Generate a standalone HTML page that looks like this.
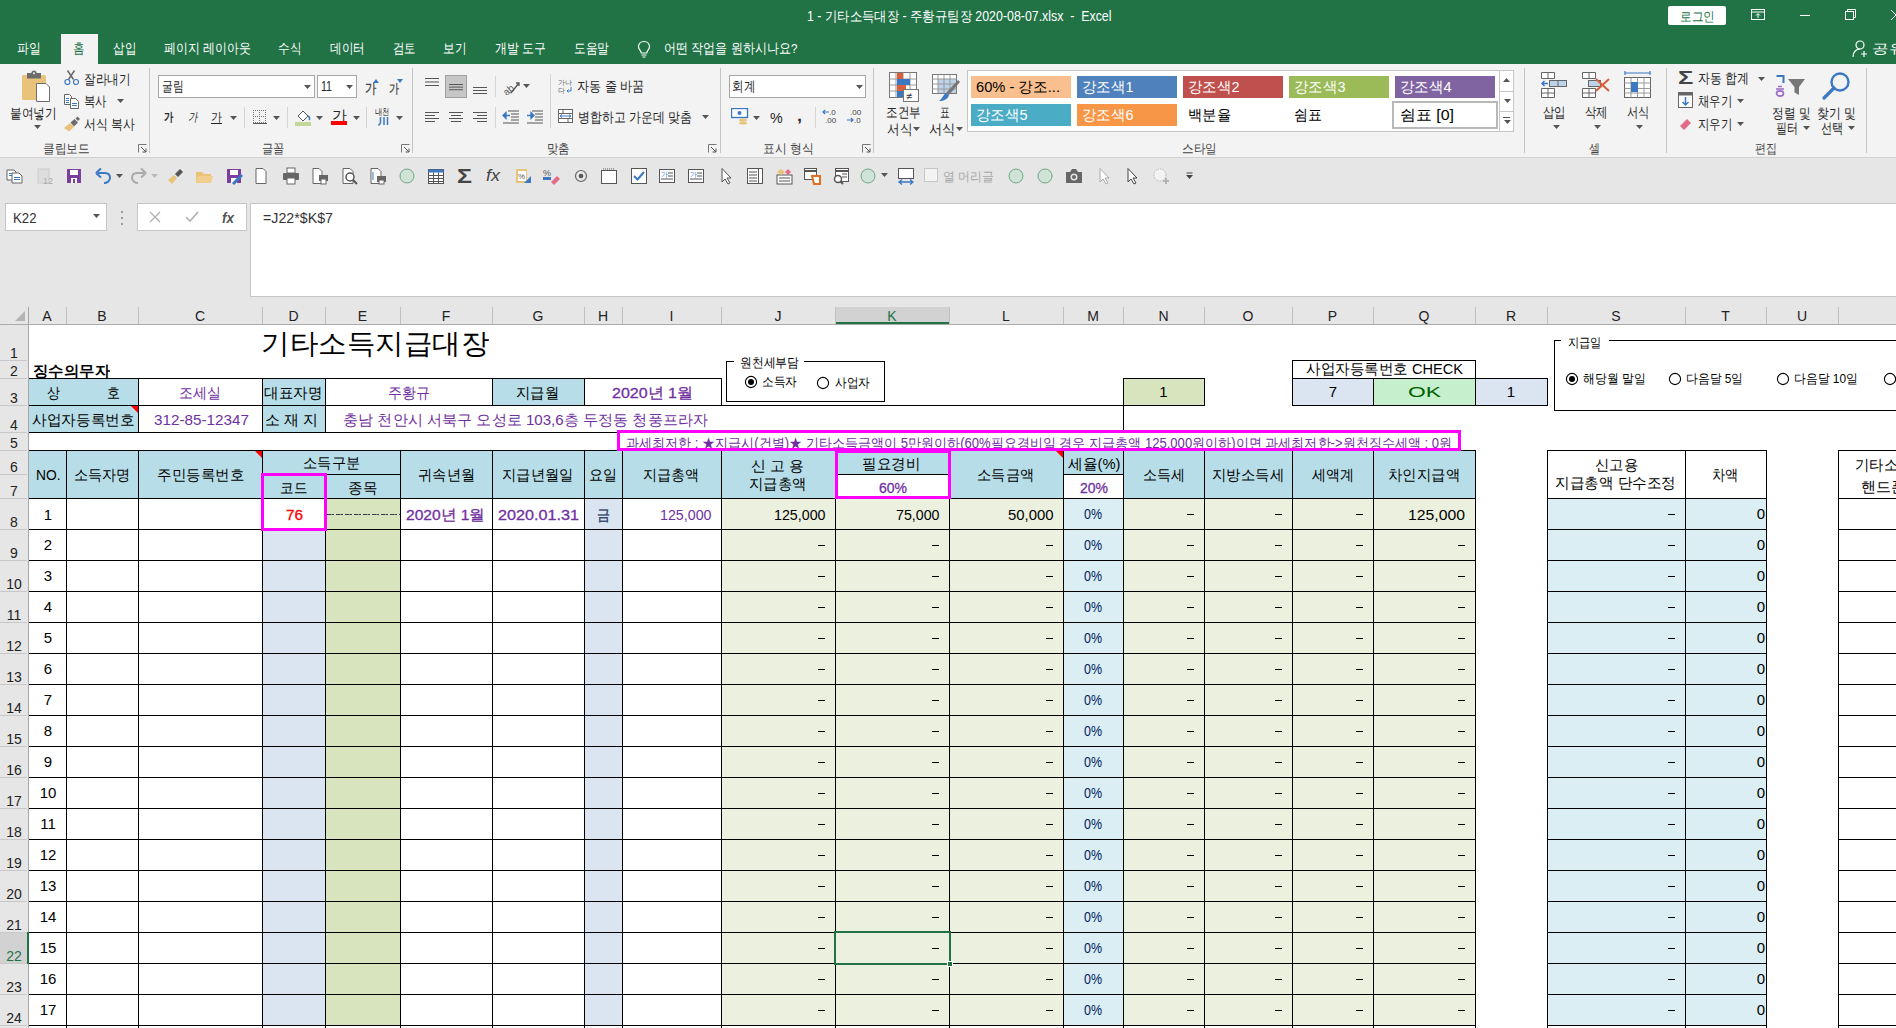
<!DOCTYPE html><html><head><meta charset="utf-8"><style>
*{margin:0;padding:0;box-sizing:border-box}
html,body{width:1896px;height:1028px;overflow:hidden;background:#fff;font-family:"Liberation Sans",sans-serif;}
#r{position:relative;width:1896px;height:1028px;overflow:hidden}
#r>div,#r>svg{position:absolute}
.t{white-space:nowrap;overflow:visible}
.f{white-space:nowrap;overflow:visible;text-align:left}
.f span{display:inline-block;transform-origin:0 50%}
</style></head><body><div id="r"><div style="left:0px;top:0px;width:1896px;height:64px;background:#217346"></div>
<div class="f" style="left:807px;top:6.5px;width:304.5px;height:18px;line-height:18px;font-size:14px;color:#fff;font-weight:normal;white-space:pre"><span>1 - 기타소득대장 - 주황규팀장 2020-08-07.xlsx  -  Excel</span></div>
<div style="left:1668px;top:6px;width:58px;height:19px;background:#fff;border-radius:2px"></div>
<div class="f" style="left:1679.5px;top:7.5px;width:35.0px;height:17px;line-height:17px;font-size:13px;color:#217346;font-weight:normal;"><span>로그인</span></div>
<svg style="left:1751px;top:9px;" width="15" height="12" viewBox="0 0 15 12"><rect x="0.5" y="0.5" width="13" height="10" fill="none" stroke="#fff"/><line x1="0.5" y1="3" x2="13.5" y2="3" stroke="#fff"/><path d="M7 9 V5 M5 6.5 L7 4.5 L9 6.5" stroke="#fff" fill="none"/></svg>
<div style="left:1800px;top:15px;width:10px;height:1px;background:#fff"></div>
<svg style="left:1845px;top:9px;" width="12" height="12" viewBox="0 0 12 12"><rect x="0.5" y="2.5" width="8" height="8" fill="none" stroke="#fff"/><path d="M2.5 2.5 V0.5 H10.5 V8.5 H8.5" fill="none" stroke="#fff"/></svg>
<svg style="left:1889px;top:9px;" width="7" height="12" viewBox="0 0 7 12"><path d="M2 1 L7 6 M2 11 L7 6" stroke="#fff" fill="none"/></svg>
<svg style="left:1852px;top:40px;" width="17" height="18" viewBox="0 0 17 18"><circle cx="8" cy="5" r="4" fill="none" stroke="#fff" stroke-width="1.2"/><path d="M1 17 C1 11 5 9 8 9" fill="none" stroke="#fff" stroke-width="1.2"/><path d="M12 11 V17 M9 14 H15" stroke="#fff" stroke-width="1.2"/></svg>
<div class="f" style="left:1872px;top:40.0px;width:33.0px;height:17px;line-height:17px;font-size:13px;color:#fff;font-weight:normal;"><span>공유</span></div>
<div style="left:61px;top:34px;width:37px;height:30px;background:#f3f3f3"></div>
<div class="f" style="left:17.3px;top:39.5px;width:23.7px;height:18px;line-height:18px;font-size:13.5px;color:#fff;font-weight:normal;"><span>파일</span></div>
<div class="f" style="left:73px;top:39.5px;width:11.6px;height:18px;line-height:18px;font-size:13.5px;color:#217346;font-weight:normal;"><span>홈</span></div>
<div class="f" style="left:112.5px;top:39.5px;width:23.1px;height:18px;line-height:18px;font-size:13.5px;color:#fff;font-weight:normal;"><span>삽입</span></div>
<div class="f" style="left:163.5px;top:39.5px;width:86.8px;height:18px;line-height:18px;font-size:13.5px;color:#fff;font-weight:normal;"><span>페이지 레이아웃</span></div>
<div class="f" style="left:278px;top:39.5px;width:23.3px;height:18px;line-height:18px;font-size:13.5px;color:#fff;font-weight:normal;"><span>수식</span></div>
<div class="f" style="left:329.6px;top:39.5px;width:34.8px;height:18px;line-height:18px;font-size:13.5px;color:#fff;font-weight:normal;"><span>데이터</span></div>
<div class="f" style="left:392.6px;top:39.5px;width:22.8px;height:18px;line-height:18px;font-size:13.5px;color:#fff;font-weight:normal;"><span>검토</span></div>
<div class="f" style="left:443.2px;top:39.5px;width:23.3px;height:18px;line-height:18px;font-size:13.5px;color:#fff;font-weight:normal;"><span>보기</span></div>
<div class="f" style="left:494.6px;top:39.5px;width:51.0px;height:18px;line-height:18px;font-size:13.5px;color:#fff;font-weight:normal;"><span>개발 도구</span></div>
<div class="f" style="left:573.5px;top:39.5px;width:35.2px;height:18px;line-height:18px;font-size:13.5px;color:#fff;font-weight:normal;"><span>도움말</span></div>
<div class="f" style="left:664.3px;top:39.5px;width:133.4px;height:18px;line-height:18px;font-size:13.5px;color:#fff;font-weight:normal;"><span>어떤 작업을 원하시나요?</span></div>
<svg style="left:636px;top:40px;" width="16" height="18" viewBox="0 0 16 18"><path d="M8 1.5 C4.5 1.5 2.5 4 2.5 6.8 C2.5 9.5 5 10.5 5.3 13 H10.7 C11 10.5 13.5 9.5 13.5 6.8 C13.5 4 11.5 1.5 8 1.5 Z" fill="none" stroke="#fff" stroke-width="1.2"/><path d="M5.5 15 H10.5 M6.5 17 H9.5" stroke="#fff" stroke-width="1.2"/></svg>
<div style="left:0px;top:64px;width:1896px;height:93px;background:#f3f3f3"></div>
<div style="left:0px;top:157px;width:1896px;height:1px;background:#d2d2d2"></div>
<div style="left:149px;top:68px;width:1px;height:85px;background:#c4c4c4"></div>
<div style="left:412px;top:68px;width:1px;height:85px;background:#c4c4c4"></div>
<div style="left:720px;top:68px;width:1px;height:85px;background:#c4c4c4"></div>
<div style="left:873px;top:68px;width:1px;height:85px;background:#c4c4c4"></div>
<div style="left:1524px;top:68px;width:1px;height:85px;background:#c4c4c4"></div>
<div style="left:1666px;top:68px;width:1px;height:85px;background:#c4c4c4"></div>
<div style="left:1866px;top:68px;width:1px;height:85px;background:#c4c4c4"></div>
<div class="f" style="left:42.7px;top:139.8px;width:46.7px;height:17px;line-height:17px;font-size:13px;color:#444;font-weight:normal;"><span>클립보드</span></div>
<div class="f" style="left:261.8px;top:139.8px;width:22.5px;height:17px;line-height:17px;font-size:13px;color:#444;font-weight:normal;"><span>글꼴</span></div>
<div class="f" style="left:546.7px;top:139.8px;width:22.8px;height:17px;line-height:17px;font-size:13px;color:#444;font-weight:normal;"><span>맞춤</span></div>
<div class="f" style="left:763.4px;top:139.8px;width:50.8px;height:17px;line-height:17px;font-size:13px;color:#444;font-weight:normal;"><span>표시 형식</span></div>
<div class="f" style="left:1181.5px;top:139.8px;width:34.8px;height:17px;line-height:17px;font-size:13px;color:#444;font-weight:normal;"><span>스타일</span></div>
<div class="f" style="left:1589.4px;top:139.8px;width:11.0px;height:17px;line-height:17px;font-size:13px;color:#444;font-weight:normal;"><span>셀</span></div>
<div class="f" style="left:1755px;top:139.8px;width:22.0px;height:17px;line-height:17px;font-size:13px;color:#444;font-weight:normal;"><span>편집</span></div>
<svg style="left:138px;top:144px;" width="9" height="9" viewBox="0 0 9 9"><path d="M0.5 8.5 V0.5 H8.5" fill="none" stroke="#777"/><path d="M3 3 L8 8 M8 4.5 V8 H4.5" fill="none" stroke="#555"/></svg>
<svg style="left:401px;top:144px;" width="9" height="9" viewBox="0 0 9 9"><path d="M0.5 8.5 V0.5 H8.5" fill="none" stroke="#777"/><path d="M3 3 L8 8 M8 4.5 V8 H4.5" fill="none" stroke="#555"/></svg>
<svg style="left:708px;top:144px;" width="9" height="9" viewBox="0 0 9 9"><path d="M0.5 8.5 V0.5 H8.5" fill="none" stroke="#777"/><path d="M3 3 L8 8 M8 4.5 V8 H4.5" fill="none" stroke="#555"/></svg>
<svg style="left:862px;top:144px;" width="9" height="9" viewBox="0 0 9 9"><path d="M0.5 8.5 V0.5 H8.5" fill="none" stroke="#777"/><path d="M3 3 L8 8 M8 4.5 V8 H4.5" fill="none" stroke="#555"/></svg>
<svg style="left:20px;top:69px;" width="32" height="34" viewBox="0 0 32 34"><rect x="2" y="6" width="24" height="25" rx="1.5" fill="#e9c37a"/><path d="M7 4 H21 V9.5 H7 Z" fill="#6d6d6d"/><circle cx="14" cy="4" r="2.6" fill="#6d6d6d"/><circle cx="14" cy="4.2" r="1" fill="#f3f3f3"/><path d="M16.5 14.5 H26 L29.5 18 V32.5 H16.5 Z" fill="#fff" stroke="#6d6d6d"/></svg>
<div class="f" style="left:10.3px;top:103.7px;width:46.7px;height:18px;line-height:18px;font-size:14px;color:#262626;font-weight:normal;"><span>붙여넣기</span></div>
<svg style="left:33.5px;top:124.5px;" width="7" height="4" viewBox="0 0 7 4"><path d="M0 0 H7 L3.5 4 Z" fill="#555"/></svg>
<svg style="left:63px;top:69px;" width="16" height="17" viewBox="0 0 16 17"><path d="M4.5 1.5 L10.5 10.5 M11.5 1.5 L5.5 10.5" stroke="#666" stroke-width="1.4"/><circle cx="4.4" cy="13" r="2.5" fill="none" stroke="#3b78c4" stroke-width="1.2"/><circle cx="13" cy="13" r="2.5" fill="none" stroke="#3b78c4" stroke-width="1.2"/></svg>
<div class="f" style="left:83.5px;top:69.5px;width:46.5px;height:18px;line-height:18px;font-size:14px;color:#262626;font-weight:normal;"><span>잘라내기</span></div>
<svg style="left:63px;top:93px;" width="17" height="16" viewBox="0 0 17 16"><path d="M1.5 1.5 H6.5 L8.5 3.5 V11.5 H1.5 Z" fill="#fff" stroke="#666"/><path d="M7.5 5.5 H12.5 L15.5 8.5 V15.5 H7.5 Z" fill="#fff" stroke="#666"/><path d="M3 5.5 H6 M3 7.5 H6 M3 9.5 H6 M9 10.5 H14 M9 12.5 H14" stroke="#3b78c4"/></svg>
<div class="f" style="left:83.5px;top:92.0px;width:22.8px;height:18px;line-height:18px;font-size:14px;color:#262626;font-weight:normal;"><span>복사</span></div>
<svg style="left:116.5px;top:99px;" width="7" height="4" viewBox="0 0 7 4"><path d="M0 0 H7 L3.5 4 Z" fill="#555"/></svg>
<svg style="left:63px;top:116px;" width="18" height="16" viewBox="0 0 18 16"><path d="M1 12 L7 7 L11 11 L6 15.5 Z" fill="#e9c37a"/><path d="M7.5 6.5 L11.5 3 L15 6.5 L11 10.5 Z" fill="#6d6d6d"/><path d="M12.5 2.5 L14.5 0.5 L17 3 L15 5 Z" fill="#6d6d6d"/></svg>
<div class="f" style="left:83.5px;top:115.2px;width:51.0px;height:18px;line-height:18px;font-size:14px;color:#262626;font-weight:normal;"><span>서식 복사</span></div>
<div style="left:158px;top:75px;width:157px;height:23px;background:#fff;border:1px solid #a6a6a6"></div>
<div class="f" style="left:162px;top:77.3px;width:21.5px;height:18px;line-height:18px;font-size:14px;color:#262626;font-weight:normal;"><span>굴림</span></div>
<svg style="left:304px;top:84.5px;" width="7" height="4" viewBox="0 0 7 4"><path d="M0 0 H7 L3.5 4 Z" fill="#555"/></svg>
<div style="left:317px;top:75px;width:40px;height:23px;background:#fff;border:1px solid #a6a6a6"></div>
<div class="f" style="left:321px;top:77.3px;width:11.0px;height:18px;line-height:18px;font-size:14px;color:#262626;font-weight:normal;"><span>11</span></div>
<svg style="left:346px;top:84.5px;" width="7" height="4" viewBox="0 0 7 4"><path d="M0 0 H7 L3.5 4 Z" fill="#555"/></svg>
<div class="f" style="left:364.7px;top:78.5px;width:11.3px;height:18px;line-height:18px;font-size:14px;color:#444;font-weight:normal;-webkit-text-stroke:0.3px #444"><span>가</span></div>
<svg style="left:373px;top:79px;" width="6" height="4" viewBox="0 0 6 4"><path d="M0 4 L3 0 L6 4 Z" fill="#3b78c4"/></svg>
<div class="f" style="left:389px;top:80.0px;width:10.0px;height:17px;line-height:17px;font-size:13px;color:#444;font-weight:normal;-webkit-text-stroke:0.3px #444"><span>가</span></div>
<svg style="left:397px;top:79px;" width="6" height="4" viewBox="0 0 6 4"><path d="M0 0 L3 4 L6 0 Z" fill="#3b78c4"/></svg>
<div class="f" style="left:163.7px;top:109.3px;width:9.3px;height:16px;line-height:16px;font-size:12px;color:#262626;font-weight:bold;"><span>가</span></div>
<div class="f" style="left:187.5px;top:109.3px;width:9.5px;height:16px;line-height:16px;font-size:12px;color:#262626;font-weight:normal;font-style:italic"><span>가</span></div>
<div class="f" style="left:211px;top:108.5px;width:11.0px;height:16px;line-height:16px;font-size:12px;color:#262626;font-weight:normal;"><span>가</span></div>
<div style="left:211px;top:123px;width:11px;height:1px;background:#262626"></div>
<svg style="left:230.4px;top:115.5px;" width="7" height="4" viewBox="0 0 7 4"><path d="M0 0 H7 L3.5 4 Z" fill="#555"/></svg>
<div style="left:244px;top:107px;width:1px;height:21px;background:#d4d4d4"></div>
<svg style="left:253px;top:110px;" width="14" height="15" viewBox="0 0 14 15"><rect x="0" y="0" width="1" height="1" fill="#777"/><rect x="0" y="6" width="1" height="1" fill="#777"/><rect x="0" y="12" width="1" height="1" fill="#777"/><rect x="2" y="0" width="1" height="1" fill="#777"/><rect x="2" y="6" width="1" height="1" fill="#777"/><rect x="2" y="12" width="1" height="1" fill="#777"/><rect x="4" y="0" width="1" height="1" fill="#777"/><rect x="4" y="6" width="1" height="1" fill="#777"/><rect x="4" y="12" width="1" height="1" fill="#777"/><rect x="6" y="0" width="1" height="1" fill="#777"/><rect x="6" y="6" width="1" height="1" fill="#777"/><rect x="6" y="12" width="1" height="1" fill="#777"/><rect x="8" y="0" width="1" height="1" fill="#777"/><rect x="8" y="6" width="1" height="1" fill="#777"/><rect x="8" y="12" width="1" height="1" fill="#777"/><rect x="10" y="0" width="1" height="1" fill="#777"/><rect x="10" y="6" width="1" height="1" fill="#777"/><rect x="10" y="12" width="1" height="1" fill="#777"/><rect x="12" y="0" width="1" height="1" fill="#777"/><rect x="12" y="6" width="1" height="1" fill="#777"/><rect x="12" y="12" width="1" height="1" fill="#777"/><rect x="0" y="0" width="1" height="1" fill="#777"/><rect x="6" y="0" width="1" height="1" fill="#777"/><rect x="12" y="0" width="1" height="1" fill="#777"/><rect x="0" y="2" width="1" height="1" fill="#777"/><rect x="6" y="2" width="1" height="1" fill="#777"/><rect x="12" y="2" width="1" height="1" fill="#777"/><rect x="0" y="4" width="1" height="1" fill="#777"/><rect x="6" y="4" width="1" height="1" fill="#777"/><rect x="12" y="4" width="1" height="1" fill="#777"/><rect x="0" y="6" width="1" height="1" fill="#777"/><rect x="6" y="6" width="1" height="1" fill="#777"/><rect x="12" y="6" width="1" height="1" fill="#777"/><rect x="0" y="8" width="1" height="1" fill="#777"/><rect x="6" y="8" width="1" height="1" fill="#777"/><rect x="12" y="8" width="1" height="1" fill="#777"/><rect x="0" y="10" width="1" height="1" fill="#777"/><rect x="6" y="10" width="1" height="1" fill="#777"/><rect x="12" y="10" width="1" height="1" fill="#777"/><rect x="0" y="13" width="14" height="1" fill="#555"/></svg>
<svg style="left:273.4px;top:115.5px;" width="7" height="4" viewBox="0 0 7 4"><path d="M0 0 H7 L3.5 4 Z" fill="#555"/></svg>
<div style="left:287px;top:107px;width:1px;height:21px;background:#d4d4d4"></div>
<svg style="left:295px;top:108px;" width="17" height="18" viewBox="0 0 17 18"><path d="M3 8 L8 3 L13 8 L8 13 Z" fill="#fff" stroke="#555"/><path d="M13 8 C15 9 15 11 14 12" stroke="#3b78c4" stroke-width="1.5" fill="none"/><rect x="0" y="14" width="16" height="4" fill="#c4d79b"/></svg>
<svg style="left:316px;top:115.5px;" width="7" height="4" viewBox="0 0 7 4"><path d="M0 0 H7 L3.5 4 Z" fill="#555"/></svg>
<div class="f" style="left:331.5px;top:106.0px;width:15.0px;height:18px;line-height:18px;font-size:14px;color:#262626;font-weight:normal;"><span>가</span></div>
<div style="left:331px;top:121px;width:16px;height:4px;background:#ff0000"></div>
<svg style="left:352.5px;top:115.5px;" width="7" height="4" viewBox="0 0 7 4"><path d="M0 0 H7 L3.5 4 Z" fill="#555"/></svg>
<div style="left:366px;top:107px;width:1px;height:21px;background:#d4d4d4"></div>
<div class="f" style="left:375px;top:105.5px;width:14.7px;height:12px;line-height:12px;font-size:9px;color:#262626;font-weight:normal;"><span>내천</span></div>
<svg style="left:377px;top:117px;" width="12" height="9" viewBox="0 0 12 9"><path d="M3.5 0 V6 L1.5 8.5 M7 0 V8 M10.5 0 V8" stroke="#3b78c4" stroke-width="1.5" fill="none"/></svg>
<svg style="left:395.7px;top:115.5px;" width="7" height="4" viewBox="0 0 7 4"><path d="M0 0 H7 L3.5 4 Z" fill="#555"/></svg>
<svg style="left:425px;top:78px;" width="14" height="10.5" viewBox="0 0 14 10.5"><rect x="0" y="0.0" width="14" height="1" fill="#555"/><rect x="0" y="3.5" width="14" height="1" fill="#555"/><rect x="0" y="7.0" width="14" height="1" fill="#555"/></svg>
<div style="left:445px;top:75px;width:22px;height:23px;background:#c6c6c6;border:1px solid #a0a0a0"></div>
<svg style="left:449px;top:84px;" width="14" height="7.800000000000001" viewBox="0 0 14 7.800000000000001"><rect x="0" y="0.0" width="14" height="1" fill="#555"/><rect x="0" y="2.6" width="14" height="1" fill="#555"/><rect x="0" y="5.2" width="14" height="1" fill="#555"/></svg>
<svg style="left:473px;top:87px;" width="14" height="9" viewBox="0 0 14 9"><rect x="0" y="0" width="14" height="1" fill="#555"/><rect x="0" y="3" width="14" height="1" fill="#555"/><rect x="0" y="6" width="14" height="1" fill="#555"/></svg>
<div style="left:495px;top:76px;width:1px;height:21px;background:#d4d4d4"></div>
<svg style="left:502px;top:78px;" width="26" height="17" viewBox="0 0 26 17"><text x="0" y="14" font-size="10" fill="#555" transform="rotate(-40 8 10)" font-family="Liberation Sans">ab</text><path d="M9 15 L17 5 M14 5 H17 V8" stroke="#555" fill="none" stroke-width="1.3"/></svg>
<svg style="left:522.6px;top:84px;" width="7" height="4" viewBox="0 0 7 4"><path d="M0 0 H7 L3.5 4 Z" fill="#555"/></svg>
<div style="left:550px;top:74px;width:1px;height:54px;background:#d4d4d4"></div>
<svg style="left:558px;top:78px;" width="16" height="16" viewBox="0 0 16 16"><text x="0" y="7" font-size="7" fill="#555" font-family="Liberation Sans">가나</text><text x="0" y="15" font-size="7" fill="#555" font-family="Liberation Sans">다</text><path d="M13 9 V13 H9 M10.5 11.5 L9 13 L10.5 14.5" stroke="#3b78c4" fill="none"/></svg>
<div class="f" style="left:577.4px;top:77.2px;width:67.2px;height:18px;line-height:18px;font-size:14px;color:#262626;font-weight:normal;"><span>자동 줄 바꿈</span></div>
<svg style="left:425px;top:112px;" width="14" height="12" viewBox="0 0 14 12"><rect x="0" y="0" width="14" height="1" fill="#555"/><rect x="0" y="3" width="10" height="1" fill="#555"/><rect x="0" y="6" width="14" height="1" fill="#555"/><rect x="0" y="9" width="10" height="1" fill="#555"/></svg>
<svg style="left:449px;top:112px;" width="14" height="12" viewBox="0 0 14 12"><rect x="0.0" y="0" width="14" height="1" fill="#555"/><rect x="2.0" y="3" width="10" height="1" fill="#555"/><rect x="0.0" y="6" width="14" height="1" fill="#555"/><rect x="2.0" y="9" width="10" height="1" fill="#555"/></svg>
<svg style="left:473px;top:112px;" width="14" height="12" viewBox="0 0 14 12"><rect x="0" y="0" width="14" height="1" fill="#555"/><rect x="4" y="3" width="10" height="1" fill="#555"/><rect x="0" y="6" width="14" height="1" fill="#555"/><rect x="4" y="9" width="10" height="1" fill="#555"/></svg>
<div style="left:495px;top:107px;width:1px;height:21px;background:#d4d4d4"></div>
<svg style="left:502px;top:110px;" width="17" height="14" viewBox="0 0 17 14"><path d="M6 1 H17 M9 4 H17 M9 7 H17 M9 10 H17 M1 13 H17" stroke="#555"/><path d="M1 5.5 L4 2.5 V8.5 Z M4 5.5 H8" fill="#3b78c4" stroke="#3b78c4" stroke-width="1.3"/></svg>
<svg style="left:526px;top:110px;" width="17" height="14" viewBox="0 0 17 14"><path d="M6 1 H17 M9 4 H17 M9 7 H17 M9 10 H17 M1 13 H17" stroke="#555"/><path d="M8 5.5 L5 2.5 V8.5 Z M1 5.5 H5" fill="#3b78c4" stroke="#3b78c4" stroke-width="1.3"/></svg>
<svg style="left:558px;top:109px;" width="16" height="15" viewBox="0 0 16 15"><rect x="0.5" y="0.5" width="14" height="13" fill="#fff" stroke="#666"/><path d="M0.5 4.5 H14.5 M0.5 9.5 H14.5 M5 0.5 V4.5 M10 9.5 V13.5" stroke="#666"/><path d="M2 7 H13 M4 5.5 L2 7 L4 8.5 M11 5.5 L13 7 L11 8.5" stroke="#3b78c4" fill="none"/></svg>
<div class="f" style="left:578.3px;top:107.5px;width:113.9px;height:18px;line-height:18px;font-size:14px;color:#262626;font-weight:normal;"><span>병합하고 가운데 맞춤</span></div>
<svg style="left:702.4px;top:115px;" width="7" height="4" viewBox="0 0 7 4"><path d="M0 0 H7 L3.5 4 Z" fill="#555"/></svg>
<div style="left:729px;top:75px;width:137px;height:23px;background:#fff;border:1px solid #a6a6a6"></div>
<div class="f" style="left:732.3px;top:77.3px;width:23.0px;height:18px;line-height:18px;font-size:14px;color:#262626;font-weight:normal;"><span>회계</span></div>
<svg style="left:855.6px;top:84.5px;" width="7" height="4" viewBox="0 0 7 4"><path d="M0 0 H7 L3.5 4 Z" fill="#555"/></svg>
<svg style="left:731px;top:108px;" width="18" height="17" viewBox="0 0 18 17"><rect x="0.5" y="0.5" width="16" height="9" fill="#fff" stroke="#3b78c4" stroke-width="1.4"/><circle cx="8.5" cy="5" r="2" fill="#3b78c4"/><ellipse cx="12" cy="12" rx="4" ry="1.6" fill="#e9c37a"/><ellipse cx="12" cy="15" rx="4" ry="1.6" fill="#e9c37a"/></svg>
<svg style="left:753.4px;top:115.5px;" width="7" height="4" viewBox="0 0 7 4"><path d="M0 0 H7 L3.5 4 Z" fill="#555"/></svg>
<div class="f" style="left:770px;top:107.5px;width:12.7px;height:20px;line-height:20px;font-size:15px;color:#262626;font-weight:normal;"><span>%</span></div>
<div class="f" style="left:797px;top:107.0px;width:5.0px;height:18px;line-height:18px;font-size:14px;color:#262626;font-weight:bold;"><span>,</span></div>
<div style="left:815px;top:107px;width:1px;height:21px;background:#d4d4d4"></div>
<svg style="left:822px;top:108px;" width="17" height="16" viewBox="0 0 17 16"><text x="7" y="7" font-size="8" fill="#444" font-family="Liberation Sans">.0</text><text x="3" y="15" font-size="8" fill="#444" font-family="Liberation Sans">.00</text><path d="M1 4 H7 M3 2 L1 4 L3 6" stroke="#3b78c4" fill="none" stroke-width="1.2"/></svg>
<svg style="left:846px;top:108px;" width="17" height="16" viewBox="0 0 17 16"><text x="4" y="7" font-size="8" fill="#444" font-family="Liberation Sans">.00</text><text x="8" y="15" font-size="8" fill="#444" font-family="Liberation Sans">.0</text><path d="M1 12 H7 M5 10 L7 12 L5 14" stroke="#3b78c4" fill="none" stroke-width="1.2"/></svg>
<svg style="left:889px;top:72px;" width="30" height="30" viewBox="0 0 30 30"><rect x="0.5" y="0.5" width="27" height="25" fill="#fff" stroke="#777"/><path d="M0.5 7 H27.5 M0.5 13 H27.5 M0.5 19 H27.5 M7 0.5 V25.5 M14 0.5 V25.5 M21 0.5 V25.5" stroke="#999"/><rect x="8" y="1" width="6" height="6" fill="#d9603b"/><rect x="8" y="7" width="13" height="6" fill="#3b78c4"/><rect x="8" y="13" width="9" height="6" fill="#d9603b"/><rect x="8" y="19" width="6" height="6" fill="#3b78c4"/><rect x="14.5" y="17.5" width="15" height="12" fill="#fff" stroke="#777"/><text x="17" y="28" font-size="11" fill="#333" font-family="Liberation Sans">≠</text></svg>
<div class="f" style="left:885.7px;top:102.7px;width:34.6px;height:18px;line-height:18px;font-size:14px;color:#262626;font-weight:normal;"><span>조건부</span></div>
<div class="f" style="left:886.7px;top:119.8px;width:25.3px;height:18px;line-height:18px;font-size:14px;color:#262626;font-weight:normal;"><span>서식</span></div>
<svg style="left:913px;top:127px;" width="7" height="4" viewBox="0 0 7 4"><path d="M0 0 H7 L3.5 4 Z" fill="#555"/></svg>
<svg style="left:932px;top:74px;" width="30" height="28" viewBox="0 0 30 28"><rect x="0.5" y="0.5" width="24" height="19" fill="#fff" stroke="#777"/><rect x="6" y="5" width="18" height="14" fill="#bcd3ea"/><path d="M0.5 5 H24.5 M0.5 10 H24.5 M0.5 15 H24.5 M6 0.5 V19.5 M12 0.5 V19.5 M18 0.5 V19.5" stroke="#999"/><path d="M28 8 L17 21 L14 19 L26 6 Z" fill="#777"/><path d="M14 19 C11 21 10 25 7 27 C12 27 16 25 17 21 Z" fill="#3b78c4"/></svg>
<div class="f" style="left:939.8px;top:102.7px;width:9.8px;height:18px;line-height:18px;font-size:14px;color:#262626;font-weight:normal;"><span>표</span></div>
<div class="f" style="left:928.5px;top:119.8px;width:26.5px;height:18px;line-height:18px;font-size:14px;color:#262626;font-weight:normal;"><span>서식</span></div>
<svg style="left:955.5px;top:127px;" width="7" height="4" viewBox="0 0 7 4"><path d="M0 0 H7 L3.5 4 Z" fill="#555"/></svg>
<div style="left:967px;top:70px;width:547px;height:62px;background:#fff;border:1px solid #c6c6c6"></div>
<div style="left:971px;top:76px;width:100px;height:22px;background:#fabf8f"></div>
<div class="f" style="left:975.5px;top:76.5px;width:84.0px;height:20px;line-height:20px;font-size:15px;color:#000;font-weight:normal;"><span>60% - 강조...</span></div>
<div style="left:1077px;top:76px;width:100px;height:22px;background:#4f81bd"></div>
<div class="f" style="left:1081.5px;top:76.5px;width:51.5px;height:20px;line-height:20px;font-size:15px;color:#fff;font-weight:normal;"><span>강조색1</span></div>
<div style="left:1183px;top:76px;width:100px;height:22px;background:#c0504d"></div>
<div class="f" style="left:1187.5px;top:76.5px;width:51.5px;height:20px;line-height:20px;font-size:15px;color:#fff;font-weight:normal;"><span>강조색2</span></div>
<div style="left:1289px;top:76px;width:100px;height:22px;background:#9bbb59"></div>
<div class="f" style="left:1293.5px;top:76.5px;width:51.5px;height:20px;line-height:20px;font-size:15px;color:#fff;font-weight:normal;"><span>강조색3</span></div>
<div style="left:1395px;top:76px;width:100px;height:22px;background:#8064a2"></div>
<div class="f" style="left:1399.5px;top:76.5px;width:51.5px;height:20px;line-height:20px;font-size:15px;color:#fff;font-weight:normal;"><span>강조색4</span></div>
<div style="left:971px;top:104px;width:100px;height:22px;background:#4bacc6"></div>
<div class="f" style="left:975.5px;top:104.5px;width:51.5px;height:20px;line-height:20px;font-size:15px;color:#fff;font-weight:normal;"><span>강조색5</span></div>
<div style="left:1077px;top:104px;width:100px;height:22px;background:#f79646"></div>
<div class="f" style="left:1081.5px;top:104.5px;width:51.5px;height:20px;line-height:20px;font-size:15px;color:#fff;font-weight:normal;"><span>강조색6</span></div>
<div style="left:1183px;top:104px;width:100px;height:22px;background:#fff"></div>
<div class="f" style="left:1187.5px;top:104.5px;width:43.0px;height:20px;line-height:20px;font-size:15px;color:#000;font-weight:normal;"><span>백분율</span></div>
<div style="left:1289px;top:104px;width:100px;height:22px;background:#fff"></div>
<div class="f" style="left:1293.5px;top:104.5px;width:28.0px;height:20px;line-height:20px;font-size:15px;color:#000;font-weight:normal;"><span>쉼표</span></div>
<div style="left:1395px;top:104px;width:100px;height:22px;background:#fff"></div>
<div class="f" style="left:1399.5px;top:104.5px;width:54.0px;height:20px;line-height:20px;font-size:15px;color:#000;font-weight:normal;"><span>쉼표 [0]</span></div>
<div style="left:1392px;top:101px;width:106px;height:28px;border:2px solid #b8b8b8;box-shadow:inset 0 0 0 1px #fff"></div>
<div style="left:1499px;top:70px;width:15px;height:62px;background:#fff;border:1px solid #c6c6c6"></div>
<div style="left:1499px;top:91px;width:15px;height:1px;background:#c6c6c6"></div>
<div style="left:1499px;top:111px;width:15px;height:1px;background:#c6c6c6"></div>
<svg style="left:1503px;top:78px;" width="7" height="4" viewBox="0 0 7 4"><path d="M0 4 H7 L3.5 0 Z" fill="#555"/></svg>
<svg style="left:1503.5px;top:99px;" width="7" height="4" viewBox="0 0 7 4"><path d="M0 0 H7 L3.5 4 Z" fill="#555"/></svg>
<div style="left:1503px;top:117px;width:7px;height:1px;background:#555"></div>
<svg style="left:1503.5px;top:120px;" width="7" height="4" viewBox="0 0 7 4"><path d="M0 0 H7 L3.5 4 Z" fill="#555"/></svg>
<svg style="left:1540px;top:71px;" width="28" height="28" viewBox="0 0 28 28"><path d="M1.5 1.5 H14.5 V7.5 H1.5 Z M8 1.5 V7.5" fill="#fff" stroke="#666"/><rect x="9.5" y="9.5" width="17" height="6" fill="#bcd3ea" stroke="#666"/><path d="M18 9.5 V15.5" stroke="#666"/><path d="M1.5 17.5 H14.5 V26.5 H1.5 Z M8 17.5 V26.5 M1.5 22 H14.5" fill="#fff" stroke="#666"/><path d="M2 12.5 H8 M4.5 10 L2 12.5 L4.5 15" stroke="#3b78c4" stroke-width="1.5" fill="none"/></svg>
<div class="f" style="left:1542.8px;top:103.0px;width:22.8px;height:18px;line-height:18px;font-size:14px;color:#262626;font-weight:normal;"><span>삽입</span></div>
<svg style="left:1552.7px;top:125px;" width="7" height="4" viewBox="0 0 7 4"><path d="M0 0 H7 L3.5 4 Z" fill="#555"/></svg>
<svg style="left:1581px;top:71px;" width="30" height="28" viewBox="0 0 30 28"><path d="M1.5 1.5 H14.5 V7.5 H1.5 Z M8 1.5 V7.5" fill="#fff" stroke="#666"/><rect x="7.5" y="9.5" width="12" height="6" fill="#bcd3ea" stroke="#666"/><path d="M1.5 17.5 H14.5 V26.5 H1.5 Z M8 17.5 V26.5 M1.5 22 H14.5" fill="#fff" stroke="#666"/><path d="M15 8 L28 20 M28 8 L15 20" stroke="#d9603b" stroke-width="2"/></svg>
<div class="f" style="left:1584.5px;top:103.0px;width:22.8px;height:18px;line-height:18px;font-size:14px;color:#262626;font-weight:normal;"><span>삭제</span></div>
<svg style="left:1594.4px;top:125px;" width="7" height="4" viewBox="0 0 7 4"><path d="M0 0 H7 L3.5 4 Z" fill="#555"/></svg>
<svg style="left:1623px;top:70px;" width="30" height="32" viewBox="0 0 30 32"><path d="M2 3 H27 M2 1 V5 M27 1 V5 M5 3 L2 3 M24 3 L27 3" stroke="#3b78c4" stroke-width="1.2"/><rect x="1.5" y="7.5" width="26" height="20" fill="#fff" stroke="#666"/><path d="M1.5 13 H27.5 M1.5 18.5 H27.5 M1.5 23 H27.5 M8 7.5 V27.5 M14.5 7.5 V27.5 M21 7.5 V27.5" stroke="#999"/><rect x="8" y="12" width="7" height="10" fill="#3b78c4"/></svg>
<div class="f" style="left:1626.5px;top:103.0px;width:22.5px;height:18px;line-height:18px;font-size:14px;color:#262626;font-weight:normal;"><span>서식</span></div>
<svg style="left:1636.4px;top:125px;" width="7" height="4" viewBox="0 0 7 4"><path d="M0 0 H7 L3.5 4 Z" fill="#555"/></svg>
<div class="f" style="left:1677.7px;top:65.0px;width:15.3px;height:25px;line-height:25px;font-size:19px;color:#444;font-weight:bold;"><span>Σ</span></div>
<div class="f" style="left:1697.6px;top:69.3px;width:51.0px;height:18px;line-height:18px;font-size:14px;color:#262626;font-weight:normal;"><span>자동 합계</span></div>
<svg style="left:1758px;top:76.5px;" width="7" height="4" viewBox="0 0 7 4"><path d="M0 0 H7 L3.5 4 Z" fill="#555"/></svg>
<svg style="left:1678px;top:92px;" width="15" height="17" viewBox="0 0 15 17"><rect x="0.5" y="0.5" width="14" height="15" fill="#fff" stroke="#666"/><rect x="0.5" y="0.5" width="14" height="3" fill="#666"/><path d="M7.5 5 V13 M4.5 10 L7.5 13 L10.5 10" stroke="#3b78c4" stroke-width="1.5" fill="none"/></svg>
<div class="f" style="left:1697.6px;top:92.0px;width:34.4px;height:18px;line-height:18px;font-size:14px;color:#262626;font-weight:normal;"><span>채우기</span></div>
<svg style="left:1736.5px;top:99px;" width="7" height="4" viewBox="0 0 7 4"><path d="M0 0 H7 L3.5 4 Z" fill="#555"/></svg>
<svg style="left:1679px;top:117px;" width="13" height="13" viewBox="0 0 13 13"><path d="M1 9 L8 2 L12 6 L5 13 Z" fill="#e46b87"/></svg>
<div class="f" style="left:1697.6px;top:114.5px;width:34.4px;height:18px;line-height:18px;font-size:14px;color:#262626;font-weight:normal;"><span>지우기</span></div>
<svg style="left:1736.5px;top:121.5px;" width="7" height="4" viewBox="0 0 7 4"><path d="M0 0 H7 L3.5 4 Z" fill="#555"/></svg>
<svg style="left:1775px;top:74px;" width="32" height="24" viewBox="0 0 32 24"><path d="M1.5 2 H8.5 V9" fill="none" stroke="#3b78c4" stroke-width="2"/><path d="M3 12.5 H7 M1 15 H9" stroke="#9b6cc8" stroke-width="1.5"/><ellipse cx="5" cy="19.5" rx="3.5" ry="2.6" fill="none" stroke="#9b6cc8" stroke-width="1.6"/><path d="M13 5 H30 L24 13 V21 L19.5 18.5 V13 Z" fill="#777"/></svg>
<div class="f" style="left:1771.6px;top:103.6px;width:38.4px;height:18px;line-height:18px;font-size:14px;color:#262626;font-weight:normal;"><span>정렬 및</span></div>
<div class="f" style="left:1776px;top:118.9px;width:22.0px;height:18px;line-height:18px;font-size:14px;color:#262626;font-weight:normal;"><span>필터</span></div>
<svg style="left:1803px;top:126px;" width="7" height="4" viewBox="0 0 7 4"><path d="M0 0 H7 L3.5 4 Z" fill="#555"/></svg>
<svg style="left:1821px;top:71px;" width="30" height="30" viewBox="0 0 30 30"><circle cx="19" cy="11" r="8.5" fill="none" stroke="#3b78c4" stroke-width="2.4"/><path d="M13 17 L3 27" stroke="#3b78c4" stroke-width="3.2" stroke-linecap="round"/></svg>
<div class="f" style="left:1816.6px;top:103.6px;width:38.7px;height:18px;line-height:18px;font-size:14px;color:#262626;font-weight:normal;"><span>찾기 및</span></div>
<div class="f" style="left:1820.6px;top:118.9px;width:22.4px;height:18px;line-height:18px;font-size:14px;color:#262626;font-weight:normal;"><span>선택</span></div>
<svg style="left:1847.5px;top:126px;" width="7" height="4" viewBox="0 0 7 4"><path d="M0 0 H7 L3.5 4 Z" fill="#555"/></svg>
<div style="left:0px;top:158px;width:1896px;height:149px;background:#e6e6e6"></div>
<svg style="left:6px;top:167px;" width="18" height="18" viewBox="0 0 18 18"><path d="M1 3 H8 L10 5 V13 H1 Z" fill="#fff" stroke="#666"/><path d="M6 6 H13 L16 9 V16 H6 Z" fill="#fff" stroke="#666"/><path d="M8 10.5 H14 M8 12.5 H14 M3 6.5 H6 M3 8.5 H6" stroke="#3b78c4"/></svg>
<svg style="left:36px;top:167px;" width="18" height="18" viewBox="0 0 18 18"><rect x="2" y="2" width="11" height="14" fill="#ddd" stroke="#ccc"/><text x="7" y="17" font-size="9" fill="#aaa" font-family="Liberation Sans">12</text></svg>
<svg style="left:65px;top:167px;" width="18" height="18" viewBox="0 0 18 18"><rect x="2" y="2" width="14" height="14" fill="#7b3fa0"/><rect x="5" y="3" width="8" height="5" fill="#fff"/><rect x="6" y="11" width="6" height="5" fill="#fff"/><rect x="8" y="12" width="2" height="4" fill="#7b3fa0"/></svg>
<svg style="left:94px;top:167px;" width="18" height="18" viewBox="0 0 18 18"><path d="M4 6 H11 C15 6 16 9 16 11 C16 14 13 16 10 16" fill="none" stroke="#3b78c4" stroke-width="2"/><path d="M2 6 L7 1.5 M2 6 L7 10.5" stroke="#3b78c4" stroke-width="2"/></svg>
<svg style="left:115.5px;top:173.5px;" width="7" height="4" viewBox="0 0 7 4"><path d="M0 0 H7 L3.5 4 Z" fill="#555"/></svg>
<svg style="left:130px;top:167px;" width="18" height="18" viewBox="0 0 18 18"><path d="M14 6 H7 C3 6 2 9 2 11 C2 14 5 16 8 16" fill="none" stroke="#aaa" stroke-width="2"/><path d="M16 6 L11 1.5 M16 6 L11 10.5" stroke="#aaa" stroke-width="2"/></svg>
<svg style="left:151.4px;top:173.5px;" width="7" height="4" viewBox="0 0 7 4"><path d="M0 0 H7 L3.5 4 Z" fill="#bbb"/></svg>
<svg style="left:166px;top:167px;" width="18" height="18" viewBox="0 0 18 18"><path d="M2 13 L8 8 L11 11 L6 17 Z" fill="#e9c37a"/><path d="M9 7 L14 2 L17 5 L12 10 Z" fill="#555"/></svg>
<svg style="left:195px;top:167px;" width="18" height="18" viewBox="0 0 18 18"><path d="M1 5 H7 L9 7 H16 V16 H1 Z" fill="#e9c37a"/><path d="M3 9 H18 L16 16 H1 Z" fill="#f0cf8e"/></svg>
<svg style="left:225px;top:167px;" width="18" height="18" viewBox="0 0 18 18"><rect x="2" y="2" width="14" height="14" fill="#7b3fa0"/><rect x="5" y="3" width="8" height="5" fill="#fff"/><rect x="6" y="11" width="6" height="5" fill="#fff"/><path d="M8 17 L17 8" stroke="#3b78c4" stroke-width="3"/></svg>
<svg style="left:252px;top:167px;" width="18" height="18" viewBox="0 0 18 18"><path d="M4 1.5 H11 L14 4.5 V16.5 H4 Z" fill="#fff" stroke="#666"/></svg>
<svg style="left:282px;top:167px;" width="18" height="18" viewBox="0 0 18 18"><rect x="5" y="1" width="8" height="5" fill="#fff" stroke="#666"/><rect x="1" y="6" width="16" height="7" rx="1" fill="#666"/><rect x="5" y="11" width="8" height="6" fill="#fff" stroke="#666"/></svg>
<svg style="left:311px;top:167px;" width="18" height="18" viewBox="0 0 18 18"><path d="M2 1.5 H8 L11 4.5 V16.5 H2 Z" fill="#fff" stroke="#666"/><rect x="8" y="8" width="9" height="6" fill="#666"/><rect x="10" y="12" width="5" height="5" fill="#fff" stroke="#666"/></svg>
<svg style="left:341px;top:167px;" width="18" height="18" viewBox="0 0 18 18"><path d="M2 1.5 H9 L12 4.5 V16.5 H2 Z" fill="#fff" stroke="#666"/><circle cx="9" cy="10" r="4" fill="#fff" stroke="#555" stroke-width="1.5"/><path d="M12 13 L16 17" stroke="#555" stroke-width="2"/></svg>
<svg style="left:369px;top:167px;" width="18" height="18" viewBox="0 0 18 18"><path d="M2 1.5 H9 L12 4.5 V16.5 H2 Z" fill="#fff" stroke="#666"/><path d="M4 5 V13" stroke="#3b78c4"/><rect x="8" y="9" width="9" height="6" fill="#666"/><rect x="10" y="13" width="5" height="4" fill="#fff" stroke="#666"/></svg>
<svg style="left:398px;top:167px;" width="18" height="18" viewBox="0 0 18 18"><circle cx="9" cy="9" r="7" fill="#cfe3d6" stroke="#6fa886"/></svg>
<svg style="left:427px;top:167px;" width="18" height="18" viewBox="0 0 18 18"><rect x="1.5" y="2.5" width="15" height="14" fill="#fff" stroke="#555"/><rect x="1.5" y="2.5" width="15" height="3" fill="#3b78c4"/><path d="M1.5 8.5 H16.5 M1.5 11.5 H16.5 M1.5 14.5 H16.5 M6.5 5.5 V16.5 M11.5 5.5 V16.5" stroke="#555"/></svg>
<div class="f" style="left:457px;top:163.0px;width:15.0px;height:26px;line-height:26px;font-size:20px;color:#444;font-weight:bold;"><span>Σ</span></div>
<div class="f" style="left:486px;top:165.0px;width:14.0px;height:22px;line-height:22px;font-size:17px;color:#444;font-weight:normal;font-style:italic;font-family:"Liberation Serif",serif"><span>fx</span></div>
<svg style="left:514px;top:167px;" width="18" height="18" viewBox="0 0 18 18"><rect x="2" y="2" width="11" height="14" fill="#e9c37a"/><rect x="4" y="4" width="8" height="10" fill="#fff"/><text x="4" y="12" font-size="8" fill="#555" font-family="Liberation Sans">%</text><path d="M10 16 L17 9 L17 16 Z" fill="#3b78c4"/></svg>
<svg style="left:542px;top:167px;" width="18" height="18" viewBox="0 0 18 18"><text x="1" y="9" font-size="9" fill="#555" font-family="Liberation Sans">%</text><rect x="1" y="10" width="8" height="3" fill="#3b78c4"/><path d="M9 15 L15 9 L18 12 L12 18 Z" fill="#e46b87"/></svg>
<svg style="left:572px;top:167px;" width="18" height="18" viewBox="0 0 18 18"><circle cx="9" cy="9" r="5.5" fill="none" stroke="#666" stroke-width="1.2"/><circle cx="9" cy="9" r="2.3" fill="#555"/></svg>
<svg style="left:600px;top:167px;" width="18" height="18" viewBox="0 0 18 18"><rect x="1.5" y="3.5" width="15" height="13" fill="#fff" stroke="#555"/><path d="M3 2 H15" stroke="#555" stroke-dasharray="1 1"/></svg>
<svg style="left:630px;top:167px;" width="18" height="18" viewBox="0 0 18 18"><rect x="1.5" y="1.5" width="15" height="15" fill="#fff" stroke="#555"/><path d="M4 9 L7.5 12.5 L14 5" stroke="#3b78c4" stroke-width="2" fill="none"/></svg>
<svg style="left:658px;top:167px;" width="18" height="18" viewBox="0 0 18 18"><rect x="1.5" y="2.5" width="15" height="13" fill="#fff" stroke="#555"/><text x="3" y="10" font-size="7" fill="#3b78c4" font-family="Liberation Sans">가</text><path d="M10 6 H15 M10 9 H15 M3 12 H15" stroke="#555"/></svg>
<svg style="left:687px;top:167px;" width="18" height="18" viewBox="0 0 18 18"><rect x="1.5" y="2.5" width="15" height="13" fill="#fff" stroke="#555"/><text x="3" y="10" font-size="7" fill="#3b78c4" font-family="Liberation Sans">가</text><path d="M10 6 H15 M10 9 H15 M3 12 H15" stroke="#555"/></svg>
<svg style="left:717px;top:167px;" width="18" height="18" viewBox="0 0 18 18"><path d="M5 1.5 V15 L8 12 L11 17 L13 16 L10 11 H14 Z" fill="#fff" stroke="#555"/></svg>
<svg style="left:746px;top:167px;" width="18" height="18" viewBox="0 0 18 18"><rect x="1.5" y="1.5" width="15" height="15" fill="#fff" stroke="#555"/><path d="M3 5 H11 M3 8 H11 M3 11 H11 M3 14 H11 M12.5 1.5 V16.5" stroke="#555"/></svg>
<svg style="left:775px;top:167px;" width="18" height="18" viewBox="0 0 18 18"><rect x="2" y="8" width="15" height="9" fill="#fff" stroke="#555"/><path d="M2 5 L6 2 L10 5 L6 8 Z" fill="#e9c37a"/><path d="M10 5 L13 2 L16 5 L13 8 Z" fill="#e46b87"/><path d="M4 11 H15 M4 14 H15" stroke="#555"/></svg>
<svg style="left:803px;top:167px;" width="18" height="18" viewBox="0 0 18 18"><rect x="1.5" y="1.5" width="12" height="11" fill="#fff" stroke="#555"/><path d="M1.5 4 H13.5" stroke="#555" stroke-width="2"/><path d="M9 9 H17 V17 H11 Z" fill="#fff" stroke="#e07020" stroke-width="2"/></svg>
<svg style="left:832px;top:167px;" width="18" height="18" viewBox="0 0 18 18"><rect x="3.5" y="1.5" width="13" height="13" fill="#fff" stroke="#555"/><path d="M3.5 4 H16.5" stroke="#555" stroke-width="2"/><path d="M10 7 H15 M10 10 H15" stroke="#555"/><circle cx="6" cy="12" r="3.5" fill="#fff" stroke="#555" stroke-width="1.5"/><path d="M8.5 14.5 L11 17" stroke="#555" stroke-width="2"/></svg>
<svg style="left:859px;top:167px;" width="18" height="18" viewBox="0 0 18 18"><circle cx="9" cy="9" r="7" fill="#cfe3d6" stroke="#6fa886"/></svg>
<svg style="left:881px;top:173px;" width="7" height="4" viewBox="0 0 7 4"><path d="M0 0 H7 L3.5 4 Z" fill="#555"/></svg>
<svg style="left:897px;top:167px;" width="18" height="18" viewBox="0 0 18 18"><rect x="1.5" y="1.5" width="15" height="10" fill="#fff" stroke="#555"/><path d="M2 15 H16 M5 12.5 L2 15 L5 17.5 M13 12.5 L16 15 L13 17.5" stroke="#3b78c4" fill="none" stroke-width="1.3"/></svg>
<svg style="left:924px;top:168px;" width="14" height="14" viewBox="0 0 14 14"><rect x="0.5" y="0.5" width="13" height="13" fill="#f3f3f3" stroke="#c6c6c6"/></svg>
<div class="f" style="left:943px;top:167.5px;width:51.0px;height:17px;line-height:17px;font-size:13px;color:#a6a6a6;font-weight:normal;"><span>열 머리글</span></div>
<svg style="left:1007px;top:167px;" width="18" height="18" viewBox="0 0 18 18"><circle cx="9" cy="9" r="7" fill="#cfe3d6" stroke="#6fa886"/></svg>
<svg style="left:1036px;top:167px;" width="18" height="18" viewBox="0 0 18 18"><circle cx="9" cy="9" r="7" fill="#cfe3d6" stroke="#6fa886"/></svg>
<svg style="left:1065px;top:167px;" width="18" height="18" viewBox="0 0 18 18"><path d="M1 5 H5 L7 2 H11 L13 5 H17 V16 H1 Z" fill="#666"/><circle cx="9" cy="10" r="3.5" fill="#e6e6e6"/><circle cx="9" cy="10" r="2" fill="#666"/></svg>
<svg style="left:1095px;top:167px;" width="18" height="18" viewBox="0 0 18 18"><path d="M5 1.5 V15 L8 12 L11 17 L13 16 L10 11 H14 Z" fill="#fff" stroke="#aaa"/></svg>
<svg style="left:1123px;top:167px;" width="18" height="18" viewBox="0 0 18 18"><path d="M5 1.5 V15 L8 12 L11 17 L13 16 L10 11 H14 Z" fill="#fff" stroke="#444"/></svg>
<svg style="left:1152px;top:167px;" width="18" height="18" viewBox="0 0 18 18"><circle cx="8" cy="8" r="6" fill="#f3f3f3" stroke="#bbb" stroke-dasharray="1.5 1"/><path d="M14 11 V17 M11 14 H17" stroke="#aaa" stroke-width="1.6"/></svg>
<svg style="left:1186px;top:172px;" width="7" height="7" viewBox="0 0 7 7"><path d="M0.5 1 H6.5" stroke="#444"/><path d="M0 3 H7 L3.5 7 Z" fill="#444"/></svg>
<div style="left:5px;top:203px;width:102px;height:28px;background:#fff;border:1px solid #c6c6c6"></div>
<div class="f" style="left:12.5px;top:207.5px;width:23.5px;height:20px;line-height:20px;font-size:15px;color:#333;font-weight:normal;"><span>K22</span></div>
<svg style="left:93px;top:214px;" width="7" height="4" viewBox="0 0 7 4"><path d="M0 0 H7 L3.5 4 Z" fill="#555"/></svg>
<div style="left:121px;top:211px;width:2px;height:2px;background:#9a9a9a"></div>
<div style="left:121px;top:217px;width:2px;height:2px;background:#9a9a9a"></div>
<div style="left:121px;top:223px;width:2px;height:2px;background:#9a9a9a"></div>
<div style="left:137px;top:203px;width:110px;height:28px;background:#fff;border:1px solid #c6c6c6"></div>
<svg style="left:149px;top:211px;" width="12" height="12" viewBox="0 0 12 12"><path d="M1 1 L11 11 M11 1 L1 11" stroke="#b0b0b0" stroke-width="1.3"/></svg>
<svg style="left:185px;top:210px;" width="14" height="13" viewBox="0 0 14 13"><path d="M1 7 L5 11 L13 2" stroke="#b0b0b0" stroke-width="1.6" fill="none"/></svg>
<div class="f" style="left:222px;top:207.5px;width:12.0px;height:20px;line-height:20px;font-size:15px;color:#555;font-weight:bold;font-style:italic;font-family:"Liberation Serif",serif"><span>fx</span></div>
<div style="left:250px;top:203px;width:1646px;height:94px;background:#fff;border:1px solid #c6c6c6;border-right:none"></div>
<div class="f" style="left:263px;top:207.5px;width:70.0px;height:20px;line-height:20px;font-size:15px;color:#333;font-weight:normal;"><span>=J22*$K$7</span></div>
<div style="left:0px;top:307px;width:1896px;height:17px;background:#e6e6e6"></div>
<div style="left:0px;top:324px;width:1896px;height:1px;background:#ababab"></div>
<div style="left:835px;top:307px;width:114px;height:17px;background:#d2d2d2"></div>
<div style="left:835px;top:322px;width:114px;height:2px;background:#217346"></div>
<div class="t" style="left:27.0px;top:307px;width:40px;height:18px;line-height:18px;text-align:center;color:#222;font-size:14px">A</div>
<div style="left:66px;top:307px;width:1px;height:17px;background:#c0c0c0"></div>
<div class="t" style="left:82.0px;top:307px;width:40px;height:18px;line-height:18px;text-align:center;color:#222;font-size:14px">B</div>
<div style="left:138px;top:307px;width:1px;height:17px;background:#c0c0c0"></div>
<div class="t" style="left:180.0px;top:307px;width:40px;height:18px;line-height:18px;text-align:center;color:#222;font-size:14px">C</div>
<div style="left:262px;top:307px;width:1px;height:17px;background:#c0c0c0"></div>
<div class="t" style="left:273.5px;top:307px;width:40px;height:18px;line-height:18px;text-align:center;color:#222;font-size:14px">D</div>
<div style="left:325px;top:307px;width:1px;height:17px;background:#c0c0c0"></div>
<div class="t" style="left:342.5px;top:307px;width:40px;height:18px;line-height:18px;text-align:center;color:#222;font-size:14px">E</div>
<div style="left:400px;top:307px;width:1px;height:17px;background:#c0c0c0"></div>
<div class="t" style="left:426.0px;top:307px;width:40px;height:18px;line-height:18px;text-align:center;color:#222;font-size:14px">F</div>
<div style="left:492px;top:307px;width:1px;height:17px;background:#c0c0c0"></div>
<div class="t" style="left:518.0px;top:307px;width:40px;height:18px;line-height:18px;text-align:center;color:#222;font-size:14px">G</div>
<div style="left:584px;top:307px;width:1px;height:17px;background:#c0c0c0"></div>
<div class="t" style="left:583.0px;top:307px;width:40px;height:18px;line-height:18px;text-align:center;color:#222;font-size:14px">H</div>
<div style="left:622px;top:307px;width:1px;height:17px;background:#c0c0c0"></div>
<div class="t" style="left:651.5px;top:307px;width:40px;height:18px;line-height:18px;text-align:center;color:#222;font-size:14px">I</div>
<div style="left:721px;top:307px;width:1px;height:17px;background:#c0c0c0"></div>
<div class="t" style="left:758.0px;top:307px;width:40px;height:18px;line-height:18px;text-align:center;color:#222;font-size:14px">J</div>
<div style="left:835px;top:307px;width:1px;height:17px;background:#c0c0c0"></div>
<div class="t" style="left:872.0px;top:307px;width:40px;height:18px;line-height:18px;text-align:center;color:#217346;font-size:14px">K</div>
<div style="left:949px;top:307px;width:1px;height:17px;background:#c0c0c0"></div>
<div class="t" style="left:986.0px;top:307px;width:40px;height:18px;line-height:18px;text-align:center;color:#222;font-size:14px">L</div>
<div style="left:1063px;top:307px;width:1px;height:17px;background:#c0c0c0"></div>
<div class="t" style="left:1073.0px;top:307px;width:40px;height:18px;line-height:18px;text-align:center;color:#222;font-size:14px">M</div>
<div style="left:1123px;top:307px;width:1px;height:17px;background:#c0c0c0"></div>
<div class="t" style="left:1143.5px;top:307px;width:40px;height:18px;line-height:18px;text-align:center;color:#222;font-size:14px">N</div>
<div style="left:1204px;top:307px;width:1px;height:17px;background:#c0c0c0"></div>
<div class="t" style="left:1228.0px;top:307px;width:40px;height:18px;line-height:18px;text-align:center;color:#222;font-size:14px">O</div>
<div style="left:1292px;top:307px;width:1px;height:17px;background:#c0c0c0"></div>
<div class="t" style="left:1312.5px;top:307px;width:40px;height:18px;line-height:18px;text-align:center;color:#222;font-size:14px">P</div>
<div style="left:1373px;top:307px;width:1px;height:17px;background:#c0c0c0"></div>
<div class="t" style="left:1404.0px;top:307px;width:40px;height:18px;line-height:18px;text-align:center;color:#222;font-size:14px">Q</div>
<div style="left:1475px;top:307px;width:1px;height:17px;background:#c0c0c0"></div>
<div class="t" style="left:1491.0px;top:307px;width:40px;height:18px;line-height:18px;text-align:center;color:#222;font-size:14px">R</div>
<div style="left:1547px;top:307px;width:1px;height:17px;background:#c0c0c0"></div>
<div class="t" style="left:1596.0px;top:307px;width:40px;height:18px;line-height:18px;text-align:center;color:#222;font-size:14px">S</div>
<div style="left:1685px;top:307px;width:1px;height:17px;background:#c0c0c0"></div>
<div class="t" style="left:1705.5px;top:307px;width:40px;height:18px;line-height:18px;text-align:center;color:#222;font-size:14px">T</div>
<div style="left:1766px;top:307px;width:1px;height:17px;background:#c0c0c0"></div>
<div class="t" style="left:1782.0px;top:307px;width:40px;height:18px;line-height:18px;text-align:center;color:#222;font-size:14px">U</div>
<div style="left:1838px;top:307px;width:1px;height:17px;background:#c0c0c0"></div>
<svg style="left:14px;top:310px;" width="12" height="12" viewBox="0 0 12 12"><path d="M11 1 L11 11 L1 11 Z" fill="#b4b4b4"/></svg>
<div style="left:0px;top:325px;width:28px;height:703px;background:#e6e6e6"></div>
<div style="left:0px;top:932px;width:27px;height:31px;background:#d2d2d2"></div>
<div style="left:0px;top:360px;width:27px;height:1px;background:#c8c8c8"></div>
<div class="t" style="left:0px;top:344.5px;width:28px;height:17px;line-height:17px;text-align:center;color:#222;font-size:14px">1</div>
<div style="left:0px;top:378px;width:27px;height:1px;background:#c8c8c8"></div>
<div class="t" style="left:0px;top:362.5px;width:28px;height:17px;line-height:17px;text-align:center;color:#222;font-size:14px">2</div>
<div style="left:0px;top:405px;width:27px;height:1px;background:#c8c8c8"></div>
<div class="t" style="left:0px;top:389.5px;width:28px;height:17px;line-height:17px;text-align:center;color:#222;font-size:14px">3</div>
<div style="left:0px;top:432px;width:27px;height:1px;background:#c8c8c8"></div>
<div class="t" style="left:0px;top:416.5px;width:28px;height:17px;line-height:17px;text-align:center;color:#222;font-size:14px">4</div>
<div style="left:0px;top:450px;width:27px;height:1px;background:#c8c8c8"></div>
<div class="t" style="left:0px;top:434.5px;width:28px;height:17px;line-height:17px;text-align:center;color:#222;font-size:14px">5</div>
<div style="left:0px;top:474px;width:27px;height:1px;background:#c8c8c8"></div>
<div class="t" style="left:0px;top:458.5px;width:28px;height:17px;line-height:17px;text-align:center;color:#222;font-size:14px">6</div>
<div style="left:0px;top:498px;width:27px;height:1px;background:#c8c8c8"></div>
<div class="t" style="left:0px;top:482.5px;width:28px;height:17px;line-height:17px;text-align:center;color:#222;font-size:14px">7</div>
<div style="left:0px;top:529px;width:27px;height:1px;background:#c8c8c8"></div>
<div class="t" style="left:0px;top:513.5px;width:28px;height:17px;line-height:17px;text-align:center;color:#222;font-size:14px">8</div>
<div style="left:0px;top:560px;width:27px;height:1px;background:#c8c8c8"></div>
<div class="t" style="left:0px;top:544.5px;width:28px;height:17px;line-height:17px;text-align:center;color:#222;font-size:14px">9</div>
<div style="left:0px;top:591px;width:27px;height:1px;background:#c8c8c8"></div>
<div class="t" style="left:0px;top:575.5px;width:28px;height:17px;line-height:17px;text-align:center;color:#222;font-size:14px">10</div>
<div style="left:0px;top:622px;width:27px;height:1px;background:#c8c8c8"></div>
<div class="t" style="left:0px;top:606.5px;width:28px;height:17px;line-height:17px;text-align:center;color:#222;font-size:14px">11</div>
<div style="left:0px;top:653px;width:27px;height:1px;background:#c8c8c8"></div>
<div class="t" style="left:0px;top:637.5px;width:28px;height:17px;line-height:17px;text-align:center;color:#222;font-size:14px">12</div>
<div style="left:0px;top:684px;width:27px;height:1px;background:#c8c8c8"></div>
<div class="t" style="left:0px;top:668.5px;width:28px;height:17px;line-height:17px;text-align:center;color:#222;font-size:14px">13</div>
<div style="left:0px;top:715px;width:27px;height:1px;background:#c8c8c8"></div>
<div class="t" style="left:0px;top:699.5px;width:28px;height:17px;line-height:17px;text-align:center;color:#222;font-size:14px">14</div>
<div style="left:0px;top:746px;width:27px;height:1px;background:#c8c8c8"></div>
<div class="t" style="left:0px;top:730.5px;width:28px;height:17px;line-height:17px;text-align:center;color:#222;font-size:14px">15</div>
<div style="left:0px;top:777px;width:27px;height:1px;background:#c8c8c8"></div>
<div class="t" style="left:0px;top:761.5px;width:28px;height:17px;line-height:17px;text-align:center;color:#222;font-size:14px">16</div>
<div style="left:0px;top:808px;width:27px;height:1px;background:#c8c8c8"></div>
<div class="t" style="left:0px;top:792.5px;width:28px;height:17px;line-height:17px;text-align:center;color:#222;font-size:14px">17</div>
<div style="left:0px;top:839px;width:27px;height:1px;background:#c8c8c8"></div>
<div class="t" style="left:0px;top:823.5px;width:28px;height:17px;line-height:17px;text-align:center;color:#222;font-size:14px">18</div>
<div style="left:0px;top:870px;width:27px;height:1px;background:#c8c8c8"></div>
<div class="t" style="left:0px;top:854.5px;width:28px;height:17px;line-height:17px;text-align:center;color:#222;font-size:14px">19</div>
<div style="left:0px;top:901px;width:27px;height:1px;background:#c8c8c8"></div>
<div class="t" style="left:0px;top:885.5px;width:28px;height:17px;line-height:17px;text-align:center;color:#222;font-size:14px">20</div>
<div style="left:0px;top:932px;width:27px;height:1px;background:#c8c8c8"></div>
<div class="t" style="left:0px;top:916.5px;width:28px;height:17px;line-height:17px;text-align:center;color:#222;font-size:14px">21</div>
<div style="left:0px;top:963px;width:27px;height:1px;background:#c8c8c8"></div>
<div class="t" style="left:0px;top:947.5px;width:28px;height:17px;line-height:17px;text-align:center;color:#217346;font-size:14px">22</div>
<div style="left:0px;top:994px;width:27px;height:1px;background:#c8c8c8"></div>
<div class="t" style="left:0px;top:978.5px;width:28px;height:17px;line-height:17px;text-align:center;color:#222;font-size:14px">23</div>
<div style="left:0px;top:1025px;width:27px;height:1px;background:#c8c8c8"></div>
<div class="t" style="left:0px;top:1009.5px;width:28px;height:17px;line-height:17px;text-align:center;color:#222;font-size:14px">24</div>
<div style="left:28px;top:378px;width:110px;height:54px;background:#b7dee8"></div>
<div style="left:262px;top:378px;width:63px;height:54px;background:#b7dee8"></div>
<div style="left:492px;top:378px;width:92px;height:27px;background:#b7dee8"></div>
<div style="left:1123px;top:378px;width:81px;height:27px;background:#d7e4bd"></div>
<div style="left:1292px;top:378px;width:81px;height:27px;background:#dbe5f1"></div>
<div style="left:1373px;top:378px;width:102px;height:27px;background:#c6efce"></div>
<div style="left:1475px;top:378px;width:72px;height:27px;background:#dbe5f1"></div>
<div style="left:28px;top:450px;width:1447px;height:48px;background:#b7dee8"></div>
<div style="left:835px;top:474px;width:114px;height:24px;background:#fff"></div>
<div style="left:1063px;top:474px;width:60px;height:24px;background:#fff"></div>
<div style="left:262px;top:498px;width:63px;height:31px;background:#fff"></div>
<div style="left:325px;top:498px;width:75px;height:31px;background:#d7e4bd"></div>
<div style="left:584px;top:498px;width:38px;height:31px;background:#dbe5f1"></div>
<div style="left:721px;top:498px;width:342px;height:31px;background:#ebf1de"></div>
<div style="left:1063px;top:498px;width:60px;height:31px;background:#daeef3"></div>
<div style="left:1123px;top:498px;width:352px;height:31px;background:#ebf1de"></div>
<div style="left:1547px;top:498px;width:219px;height:31px;background:#daeef3"></div>
<div style="left:262px;top:529px;width:63px;height:31px;background:#dbe5f1"></div>
<div style="left:325px;top:529px;width:75px;height:31px;background:#d7e4bd"></div>
<div style="left:584px;top:529px;width:38px;height:31px;background:#dbe5f1"></div>
<div style="left:721px;top:529px;width:342px;height:31px;background:#ebf1de"></div>
<div style="left:1063px;top:529px;width:60px;height:31px;background:#daeef3"></div>
<div style="left:1123px;top:529px;width:352px;height:31px;background:#ebf1de"></div>
<div style="left:1547px;top:529px;width:219px;height:31px;background:#daeef3"></div>
<div style="left:262px;top:560px;width:63px;height:31px;background:#dbe5f1"></div>
<div style="left:325px;top:560px;width:75px;height:31px;background:#d7e4bd"></div>
<div style="left:584px;top:560px;width:38px;height:31px;background:#dbe5f1"></div>
<div style="left:721px;top:560px;width:342px;height:31px;background:#ebf1de"></div>
<div style="left:1063px;top:560px;width:60px;height:31px;background:#daeef3"></div>
<div style="left:1123px;top:560px;width:352px;height:31px;background:#ebf1de"></div>
<div style="left:1547px;top:560px;width:219px;height:31px;background:#daeef3"></div>
<div style="left:262px;top:591px;width:63px;height:31px;background:#dbe5f1"></div>
<div style="left:325px;top:591px;width:75px;height:31px;background:#d7e4bd"></div>
<div style="left:584px;top:591px;width:38px;height:31px;background:#dbe5f1"></div>
<div style="left:721px;top:591px;width:342px;height:31px;background:#ebf1de"></div>
<div style="left:1063px;top:591px;width:60px;height:31px;background:#daeef3"></div>
<div style="left:1123px;top:591px;width:352px;height:31px;background:#ebf1de"></div>
<div style="left:1547px;top:591px;width:219px;height:31px;background:#daeef3"></div>
<div style="left:262px;top:622px;width:63px;height:31px;background:#dbe5f1"></div>
<div style="left:325px;top:622px;width:75px;height:31px;background:#d7e4bd"></div>
<div style="left:584px;top:622px;width:38px;height:31px;background:#dbe5f1"></div>
<div style="left:721px;top:622px;width:342px;height:31px;background:#ebf1de"></div>
<div style="left:1063px;top:622px;width:60px;height:31px;background:#daeef3"></div>
<div style="left:1123px;top:622px;width:352px;height:31px;background:#ebf1de"></div>
<div style="left:1547px;top:622px;width:219px;height:31px;background:#daeef3"></div>
<div style="left:262px;top:653px;width:63px;height:31px;background:#dbe5f1"></div>
<div style="left:325px;top:653px;width:75px;height:31px;background:#d7e4bd"></div>
<div style="left:584px;top:653px;width:38px;height:31px;background:#dbe5f1"></div>
<div style="left:721px;top:653px;width:342px;height:31px;background:#ebf1de"></div>
<div style="left:1063px;top:653px;width:60px;height:31px;background:#daeef3"></div>
<div style="left:1123px;top:653px;width:352px;height:31px;background:#ebf1de"></div>
<div style="left:1547px;top:653px;width:219px;height:31px;background:#daeef3"></div>
<div style="left:262px;top:684px;width:63px;height:31px;background:#dbe5f1"></div>
<div style="left:325px;top:684px;width:75px;height:31px;background:#d7e4bd"></div>
<div style="left:584px;top:684px;width:38px;height:31px;background:#dbe5f1"></div>
<div style="left:721px;top:684px;width:342px;height:31px;background:#ebf1de"></div>
<div style="left:1063px;top:684px;width:60px;height:31px;background:#daeef3"></div>
<div style="left:1123px;top:684px;width:352px;height:31px;background:#ebf1de"></div>
<div style="left:1547px;top:684px;width:219px;height:31px;background:#daeef3"></div>
<div style="left:262px;top:715px;width:63px;height:31px;background:#dbe5f1"></div>
<div style="left:325px;top:715px;width:75px;height:31px;background:#d7e4bd"></div>
<div style="left:584px;top:715px;width:38px;height:31px;background:#dbe5f1"></div>
<div style="left:721px;top:715px;width:342px;height:31px;background:#ebf1de"></div>
<div style="left:1063px;top:715px;width:60px;height:31px;background:#daeef3"></div>
<div style="left:1123px;top:715px;width:352px;height:31px;background:#ebf1de"></div>
<div style="left:1547px;top:715px;width:219px;height:31px;background:#daeef3"></div>
<div style="left:262px;top:746px;width:63px;height:31px;background:#dbe5f1"></div>
<div style="left:325px;top:746px;width:75px;height:31px;background:#d7e4bd"></div>
<div style="left:584px;top:746px;width:38px;height:31px;background:#dbe5f1"></div>
<div style="left:721px;top:746px;width:342px;height:31px;background:#ebf1de"></div>
<div style="left:1063px;top:746px;width:60px;height:31px;background:#daeef3"></div>
<div style="left:1123px;top:746px;width:352px;height:31px;background:#ebf1de"></div>
<div style="left:1547px;top:746px;width:219px;height:31px;background:#daeef3"></div>
<div style="left:262px;top:777px;width:63px;height:31px;background:#dbe5f1"></div>
<div style="left:325px;top:777px;width:75px;height:31px;background:#d7e4bd"></div>
<div style="left:584px;top:777px;width:38px;height:31px;background:#dbe5f1"></div>
<div style="left:721px;top:777px;width:342px;height:31px;background:#ebf1de"></div>
<div style="left:1063px;top:777px;width:60px;height:31px;background:#daeef3"></div>
<div style="left:1123px;top:777px;width:352px;height:31px;background:#ebf1de"></div>
<div style="left:1547px;top:777px;width:219px;height:31px;background:#daeef3"></div>
<div style="left:262px;top:808px;width:63px;height:31px;background:#dbe5f1"></div>
<div style="left:325px;top:808px;width:75px;height:31px;background:#d7e4bd"></div>
<div style="left:584px;top:808px;width:38px;height:31px;background:#dbe5f1"></div>
<div style="left:721px;top:808px;width:342px;height:31px;background:#ebf1de"></div>
<div style="left:1063px;top:808px;width:60px;height:31px;background:#daeef3"></div>
<div style="left:1123px;top:808px;width:352px;height:31px;background:#ebf1de"></div>
<div style="left:1547px;top:808px;width:219px;height:31px;background:#daeef3"></div>
<div style="left:262px;top:839px;width:63px;height:31px;background:#dbe5f1"></div>
<div style="left:325px;top:839px;width:75px;height:31px;background:#d7e4bd"></div>
<div style="left:584px;top:839px;width:38px;height:31px;background:#dbe5f1"></div>
<div style="left:721px;top:839px;width:342px;height:31px;background:#ebf1de"></div>
<div style="left:1063px;top:839px;width:60px;height:31px;background:#daeef3"></div>
<div style="left:1123px;top:839px;width:352px;height:31px;background:#ebf1de"></div>
<div style="left:1547px;top:839px;width:219px;height:31px;background:#daeef3"></div>
<div style="left:262px;top:870px;width:63px;height:31px;background:#dbe5f1"></div>
<div style="left:325px;top:870px;width:75px;height:31px;background:#d7e4bd"></div>
<div style="left:584px;top:870px;width:38px;height:31px;background:#dbe5f1"></div>
<div style="left:721px;top:870px;width:342px;height:31px;background:#ebf1de"></div>
<div style="left:1063px;top:870px;width:60px;height:31px;background:#daeef3"></div>
<div style="left:1123px;top:870px;width:352px;height:31px;background:#ebf1de"></div>
<div style="left:1547px;top:870px;width:219px;height:31px;background:#daeef3"></div>
<div style="left:262px;top:901px;width:63px;height:31px;background:#dbe5f1"></div>
<div style="left:325px;top:901px;width:75px;height:31px;background:#d7e4bd"></div>
<div style="left:584px;top:901px;width:38px;height:31px;background:#dbe5f1"></div>
<div style="left:721px;top:901px;width:342px;height:31px;background:#ebf1de"></div>
<div style="left:1063px;top:901px;width:60px;height:31px;background:#daeef3"></div>
<div style="left:1123px;top:901px;width:352px;height:31px;background:#ebf1de"></div>
<div style="left:1547px;top:901px;width:219px;height:31px;background:#daeef3"></div>
<div style="left:262px;top:932px;width:63px;height:31px;background:#dbe5f1"></div>
<div style="left:325px;top:932px;width:75px;height:31px;background:#d7e4bd"></div>
<div style="left:584px;top:932px;width:38px;height:31px;background:#dbe5f1"></div>
<div style="left:721px;top:932px;width:342px;height:31px;background:#ebf1de"></div>
<div style="left:1063px;top:932px;width:60px;height:31px;background:#daeef3"></div>
<div style="left:1123px;top:932px;width:352px;height:31px;background:#ebf1de"></div>
<div style="left:1547px;top:932px;width:219px;height:31px;background:#daeef3"></div>
<div style="left:262px;top:963px;width:63px;height:31px;background:#dbe5f1"></div>
<div style="left:325px;top:963px;width:75px;height:31px;background:#d7e4bd"></div>
<div style="left:584px;top:963px;width:38px;height:31px;background:#dbe5f1"></div>
<div style="left:721px;top:963px;width:342px;height:31px;background:#ebf1de"></div>
<div style="left:1063px;top:963px;width:60px;height:31px;background:#daeef3"></div>
<div style="left:1123px;top:963px;width:352px;height:31px;background:#ebf1de"></div>
<div style="left:1547px;top:963px;width:219px;height:31px;background:#daeef3"></div>
<div style="left:262px;top:994px;width:63px;height:31px;background:#dbe5f1"></div>
<div style="left:325px;top:994px;width:75px;height:31px;background:#d7e4bd"></div>
<div style="left:584px;top:994px;width:38px;height:31px;background:#dbe5f1"></div>
<div style="left:721px;top:994px;width:342px;height:31px;background:#ebf1de"></div>
<div style="left:1063px;top:994px;width:60px;height:31px;background:#daeef3"></div>
<div style="left:1123px;top:994px;width:352px;height:31px;background:#ebf1de"></div>
<div style="left:1547px;top:994px;width:219px;height:31px;background:#daeef3"></div>
<div style="left:28px;top:378px;width:694px;height:1px;background:#000"></div>
<div style="left:28px;top:405px;width:694px;height:1px;background:#000"></div>
<div style="left:28px;top:432px;width:694px;height:1px;background:#000"></div>
<div style="left:28px;top:378px;width:1px;height:28px;background:#000"></div>
<div style="left:138px;top:378px;width:1px;height:28px;background:#000"></div>
<div style="left:262px;top:378px;width:1px;height:28px;background:#000"></div>
<div style="left:325px;top:378px;width:1px;height:28px;background:#000"></div>
<div style="left:492px;top:378px;width:1px;height:28px;background:#000"></div>
<div style="left:584px;top:378px;width:1px;height:28px;background:#000"></div>
<div style="left:721px;top:378px;width:1px;height:28px;background:#000"></div>
<div style="left:138px;top:405px;width:1px;height:28px;background:#000"></div>
<div style="left:262px;top:405px;width:1px;height:28px;background:#000"></div>
<div style="left:325px;top:405px;width:1px;height:28px;background:#000"></div>
<div style="left:28px;top:405px;width:1px;height:28px;background:#000"></div>
<div style="left:492px;top:378px;width:1px;height:27px;background:#000"></div>
<div style="left:721px;top:405px;width:484px;height:1px;background:#000"></div>
<div style="left:1123px;top:378px;width:1px;height:55px;background:#000"></div>
<div style="left:1123px;top:378px;width:82px;height:1px;background:#000"></div>
<div style="left:1204px;top:378px;width:1px;height:28px;background:#000"></div>
<div style="left:1292px;top:360px;width:184px;height:1px;background:#000"></div>
<div style="left:1292px;top:378px;width:256px;height:1px;background:#000"></div>
<div style="left:1292px;top:405px;width:256px;height:1px;background:#000"></div>
<div style="left:1292px;top:360px;width:1px;height:46px;background:#000"></div>
<div style="left:1373px;top:378px;width:1px;height:28px;background:#000"></div>
<div style="left:1475px;top:360px;width:1px;height:46px;background:#000"></div>
<div style="left:1547px;top:378px;width:1px;height:28px;background:#000"></div>
<div style="left:28px;top:450px;width:1448px;height:1px;background:#000"></div>
<div style="left:28px;top:498px;width:1448px;height:1px;background:#000"></div>
<div style="left:28px;top:529px;width:1448px;height:1px;background:#000"></div>
<div style="left:28px;top:560px;width:1448px;height:1px;background:#000"></div>
<div style="left:28px;top:591px;width:1448px;height:1px;background:#000"></div>
<div style="left:28px;top:622px;width:1448px;height:1px;background:#000"></div>
<div style="left:28px;top:653px;width:1448px;height:1px;background:#000"></div>
<div style="left:28px;top:684px;width:1448px;height:1px;background:#000"></div>
<div style="left:28px;top:715px;width:1448px;height:1px;background:#000"></div>
<div style="left:28px;top:746px;width:1448px;height:1px;background:#000"></div>
<div style="left:28px;top:777px;width:1448px;height:1px;background:#000"></div>
<div style="left:28px;top:808px;width:1448px;height:1px;background:#000"></div>
<div style="left:28px;top:839px;width:1448px;height:1px;background:#000"></div>
<div style="left:28px;top:870px;width:1448px;height:1px;background:#000"></div>
<div style="left:28px;top:901px;width:1448px;height:1px;background:#000"></div>
<div style="left:28px;top:932px;width:1448px;height:1px;background:#000"></div>
<div style="left:28px;top:963px;width:1448px;height:1px;background:#000"></div>
<div style="left:28px;top:994px;width:1448px;height:1px;background:#000"></div>
<div style="left:28px;top:1025px;width:1448px;height:1px;background:#000"></div>
<div style="left:262px;top:474px;width:139px;height:1px;background:#000"></div>
<div style="left:835px;top:474px;width:115px;height:1px;background:#000"></div>
<div style="left:1063px;top:474px;width:61px;height:1px;background:#000"></div>
<div style="left:28px;top:450px;width:1px;height:579px;background:#000"></div>
<div style="left:66px;top:450px;width:1px;height:579px;background:#000"></div>
<div style="left:138px;top:450px;width:1px;height:579px;background:#000"></div>
<div style="left:262px;top:450px;width:1px;height:579px;background:#000"></div>
<div style="left:400px;top:450px;width:1px;height:579px;background:#000"></div>
<div style="left:492px;top:450px;width:1px;height:579px;background:#000"></div>
<div style="left:584px;top:450px;width:1px;height:579px;background:#000"></div>
<div style="left:622px;top:450px;width:1px;height:579px;background:#000"></div>
<div style="left:721px;top:450px;width:1px;height:579px;background:#000"></div>
<div style="left:835px;top:450px;width:1px;height:579px;background:#000"></div>
<div style="left:949px;top:450px;width:1px;height:579px;background:#000"></div>
<div style="left:1063px;top:450px;width:1px;height:579px;background:#000"></div>
<div style="left:1123px;top:450px;width:1px;height:579px;background:#000"></div>
<div style="left:1204px;top:450px;width:1px;height:579px;background:#000"></div>
<div style="left:1292px;top:450px;width:1px;height:579px;background:#000"></div>
<div style="left:1373px;top:450px;width:1px;height:579px;background:#000"></div>
<div style="left:1475px;top:450px;width:1px;height:579px;background:#000"></div>
<div style="left:325px;top:474px;width:1px;height:555px;background:#000"></div>
<div style="left:1547px;top:450px;width:220px;height:1px;background:#000"></div>
<div style="left:1547px;top:498px;width:220px;height:1px;background:#000"></div>
<div style="left:1547px;top:529px;width:220px;height:1px;background:#000"></div>
<div style="left:1547px;top:560px;width:220px;height:1px;background:#000"></div>
<div style="left:1547px;top:591px;width:220px;height:1px;background:#000"></div>
<div style="left:1547px;top:622px;width:220px;height:1px;background:#000"></div>
<div style="left:1547px;top:653px;width:220px;height:1px;background:#000"></div>
<div style="left:1547px;top:684px;width:220px;height:1px;background:#000"></div>
<div style="left:1547px;top:715px;width:220px;height:1px;background:#000"></div>
<div style="left:1547px;top:746px;width:220px;height:1px;background:#000"></div>
<div style="left:1547px;top:777px;width:220px;height:1px;background:#000"></div>
<div style="left:1547px;top:808px;width:220px;height:1px;background:#000"></div>
<div style="left:1547px;top:839px;width:220px;height:1px;background:#000"></div>
<div style="left:1547px;top:870px;width:220px;height:1px;background:#000"></div>
<div style="left:1547px;top:901px;width:220px;height:1px;background:#000"></div>
<div style="left:1547px;top:932px;width:220px;height:1px;background:#000"></div>
<div style="left:1547px;top:963px;width:220px;height:1px;background:#000"></div>
<div style="left:1547px;top:994px;width:220px;height:1px;background:#000"></div>
<div style="left:1547px;top:1025px;width:220px;height:1px;background:#000"></div>
<div style="left:1547px;top:450px;width:1px;height:579px;background:#000"></div>
<div style="left:1685px;top:450px;width:1px;height:579px;background:#000"></div>
<div style="left:1766px;top:450px;width:1px;height:579px;background:#000"></div>
<div style="left:1838px;top:450px;width:59px;height:1px;background:#000"></div>
<div style="left:1838px;top:498px;width:59px;height:1px;background:#000"></div>
<div style="left:1838px;top:529px;width:59px;height:1px;background:#000"></div>
<div style="left:1838px;top:560px;width:59px;height:1px;background:#000"></div>
<div style="left:1838px;top:591px;width:59px;height:1px;background:#000"></div>
<div style="left:1838px;top:622px;width:59px;height:1px;background:#000"></div>
<div style="left:1838px;top:653px;width:59px;height:1px;background:#000"></div>
<div style="left:1838px;top:684px;width:59px;height:1px;background:#000"></div>
<div style="left:1838px;top:715px;width:59px;height:1px;background:#000"></div>
<div style="left:1838px;top:746px;width:59px;height:1px;background:#000"></div>
<div style="left:1838px;top:777px;width:59px;height:1px;background:#000"></div>
<div style="left:1838px;top:808px;width:59px;height:1px;background:#000"></div>
<div style="left:1838px;top:839px;width:59px;height:1px;background:#000"></div>
<div style="left:1838px;top:870px;width:59px;height:1px;background:#000"></div>
<div style="left:1838px;top:901px;width:59px;height:1px;background:#000"></div>
<div style="left:1838px;top:932px;width:59px;height:1px;background:#000"></div>
<div style="left:1838px;top:963px;width:59px;height:1px;background:#000"></div>
<div style="left:1838px;top:994px;width:59px;height:1px;background:#000"></div>
<div style="left:1838px;top:1025px;width:59px;height:1px;background:#000"></div>
<div style="left:1838px;top:450px;width:1px;height:579px;background:#000"></div>
<svg style="left:131px;top:406px;" width="7" height="7" viewBox="0 0 7 7"><path d="M0 0 L7 0 L7 7 Z" fill="#ff0000"/></svg>
<svg style="left:255px;top:451px;" width="7" height="7" viewBox="0 0 7 7"><path d="M0 0 L7 0 L7 7 Z" fill="#ff0000"/></svg>
<svg style="left:1056px;top:451px;" width="7" height="7" viewBox="0 0 7 7"><path d="M0 0 L7 0 L7 7 Z" fill="#ff0000"/></svg>
<div class="f" style="left:261px;top:326.0px;width:228.0px;height:36px;line-height:36px;font-size:28px;color:#000;font-weight:normal;"><span>기타소득지급대장</span></div>
<div class="f" style="left:33px;top:360.5px;width:77.0px;height:20px;line-height:20px;font-size:15px;color:#000;font-weight:bold;"><span>징수의무자</span></div>
<div class="f" style="left:47px;top:382.5px;width:13.0px;height:20px;line-height:20px;font-size:15px;color:#000;font-weight:normal;"><span>상</span></div>
<div class="f" style="left:107px;top:382.5px;width:13.0px;height:20px;line-height:20px;font-size:15px;color:#000;font-weight:normal;"><span>호</span></div>
<div class="f" style="left:179px;top:382.5px;width:42.0px;height:20px;line-height:20px;font-size:15px;color:#7030a0;font-weight:normal;"><span>조세실</span></div>
<div class="f" style="left:264px;top:382.5px;width:58.0px;height:20px;line-height:20px;font-size:15px;color:#000;font-weight:normal;"><span>대표자명</span></div>
<div class="f" style="left:388px;top:382.5px;width:42.0px;height:20px;line-height:20px;font-size:15px;color:#7030a0;font-weight:normal;"><span>주황규</span></div>
<div class="f" style="left:516px;top:382.5px;width:43.0px;height:20px;line-height:20px;font-size:15px;color:#000;font-weight:normal;"><span>지급월</span></div>
<div class="f" style="left:612px;top:382.5px;width:81.0px;height:20px;line-height:20px;font-size:15px;color:#7030a0;font-weight:normal;-webkit-text-stroke:0.3px currentColor"><span>2020년 1월</span></div>
<div class="f" style="left:31.5px;top:409.5px;width:102.5px;height:20px;line-height:20px;font-size:15px;color:#000;font-weight:normal;"><span>사업자등록번호</span></div>
<div class="f" style="left:154px;top:409.5px;width:95.0px;height:20px;line-height:20px;font-size:15px;color:#7030a0;font-weight:normal;"><span>312-85-12347</span></div>
<div class="f" style="left:265px;top:409.5px;width:53.0px;height:20px;line-height:20px;font-size:15px;color:#000;font-weight:normal;"><span>소 재 지</span></div>
<div class="f" style="left:343px;top:409.5px;width:365.0px;height:20px;line-height:20px;font-size:15px;color:#7030a0;font-weight:normal;"><span>충남 천안시 서북구 오성로 103,6층 두정동 청풍프라자</span></div>
<div class="t" style="left:1103.5px;top:381.5px;width:120px;height:20px;line-height:20px;text-align:center;font-size:15px;color:#000;font-weight:normal;">1</div>
<div class="f" style="left:1306px;top:359.0px;width:157.0px;height:20px;line-height:20px;font-size:15px;color:#000;font-weight:normal;"><span>사업자등록번호 CHECK</span></div>
<div class="t" style="left:1273px;top:381.5px;width:120px;height:20px;line-height:20px;text-align:center;font-size:15px;color:#000;font-weight:normal;">7</div>
<div class="f" style="left:1408px;top:381.5px;width:33.0px;height:20px;line-height:20px;font-size:15px;color:#006100;font-weight:normal;"><span>OK</span></div>
<div class="t" style="left:1451px;top:381.5px;width:120px;height:20px;line-height:20px;text-align:center;font-size:15px;color:#000;font-weight:normal;">1</div>
<div style="left:617px;top:430px;width:844px;height:21px;background:#fff"></div>
<div class="f" style="left:626px;top:433.5px;width:826.0px;height:18px;line-height:18px;font-size:14px;color:#7030a0;font-weight:normal;"><span>과세최저한 : ★지급시(건별)★ 기타소득금액이 5만원이하(60%필요경비일 경우 지급총액 125,000원이하)이면 과세최저한-&gt;원천징수세액 : 0원</span></div>
<div style="left:617px;top:430px;width:844px;height:21px;border:3px solid #ff00ff"></div>
<div class="f" style="left:35.5px;top:465.0px;width:24.5px;height:20px;line-height:20px;font-size:15px;color:#000;font-weight:normal;"><span>NO.</span></div>
<div class="f" style="left:74px;top:465.0px;width:56.5px;height:20px;line-height:20px;font-size:15px;color:#000;font-weight:normal;"><span>소득자명</span></div>
<div class="f" style="left:157px;top:465.0px;width:87.0px;height:20px;line-height:20px;font-size:15px;color:#000;font-weight:normal;"><span>주민등록번호</span></div>
<div class="f" style="left:303px;top:453.0px;width:57.0px;height:20px;line-height:20px;font-size:15px;color:#000;font-weight:normal;"><span>소득구분</span></div>
<div class="f" style="left:280px;top:477.5px;width:27.0px;height:20px;line-height:20px;font-size:15px;color:#000;font-weight:normal;"><span>코드</span></div>
<div class="f" style="left:348px;top:477.5px;width:29.0px;height:20px;line-height:20px;font-size:15px;color:#000;font-weight:normal;"><span>종목</span></div>
<div class="f" style="left:418px;top:465.0px;width:57.0px;height:20px;line-height:20px;font-size:15px;color:#000;font-weight:normal;"><span>귀속년월</span></div>
<div class="f" style="left:502px;top:465.0px;width:71.5px;height:20px;line-height:20px;font-size:15px;color:#000;font-weight:normal;"><span>지급년월일</span></div>
<div class="f" style="left:589px;top:465.0px;width:28.0px;height:20px;line-height:20px;font-size:15px;color:#000;font-weight:normal;"><span>요일</span></div>
<div class="f" style="left:643px;top:465.0px;width:56.5px;height:20px;line-height:20px;font-size:15px;color:#000;font-weight:normal;"><span>지급총액</span></div>
<div class="f" style="left:751px;top:455.5px;width:53.0px;height:20px;line-height:20px;font-size:15px;color:#000;font-weight:normal;"><span>신 고 용</span></div>
<div class="f" style="left:748.5px;top:473.5px;width:57.5px;height:20px;line-height:20px;font-size:15px;color:#000;font-weight:normal;"><span>지급총액</span></div>
<div class="f" style="left:862px;top:453.5px;width:58.0px;height:20px;line-height:20px;font-size:15px;color:#000;font-weight:normal;"><span>필요경비</span></div>
<div class="f" style="left:879px;top:477.5px;width:28.0px;height:20px;line-height:20px;font-size:15px;color:#7030a0;font-weight:normal;-webkit-text-stroke:0.3px currentColor"><span>60%</span></div>
<div class="f" style="left:977px;top:465.0px;width:57.0px;height:20px;line-height:20px;font-size:15px;color:#000;font-weight:normal;"><span>소득금액</span></div>
<div class="f" style="left:1067.5px;top:453.5px;width:52.5px;height:20px;line-height:20px;font-size:15px;color:#000;font-weight:normal;"><span>세율(%)</span></div>
<div class="f" style="left:1080px;top:477.5px;width:28.0px;height:20px;line-height:20px;font-size:15px;color:#7030a0;font-weight:normal;-webkit-text-stroke:0.3px currentColor"><span>20%</span></div>
<div class="f" style="left:1143px;top:465.0px;width:42.0px;height:20px;line-height:20px;font-size:15px;color:#000;font-weight:normal;"><span>소득세</span></div>
<div class="f" style="left:1212px;top:465.0px;width:72.0px;height:20px;line-height:20px;font-size:15px;color:#000;font-weight:normal;"><span>지방소득세</span></div>
<div class="f" style="left:1312px;top:465.0px;width:42.0px;height:20px;line-height:20px;font-size:15px;color:#000;font-weight:normal;"><span>세액계</span></div>
<div class="f" style="left:1388px;top:465.0px;width:72.0px;height:20px;line-height:20px;font-size:15px;color:#000;font-weight:normal;"><span>차인지급액</span></div>
<div class="f" style="left:1595px;top:455.0px;width:43.0px;height:20px;line-height:20px;font-size:15px;color:#000;font-weight:normal;"><span>신고용</span></div>
<div class="f" style="left:1555px;top:473.0px;width:121.0px;height:20px;line-height:20px;font-size:15px;color:#000;font-weight:normal;"><span>지급총액 단수조정</span></div>
<div class="f" style="left:1712px;top:465.0px;width:26.5px;height:20px;line-height:20px;font-size:15px;color:#000;font-weight:normal;"><span>차액</span></div>
<div class="f" style="left:1854.5px;top:455.0px;width:57.5px;height:20px;line-height:20px;font-size:15px;color:#000;font-weight:normal;"><span>기타소득</span></div>
<div class="f" style="left:1861px;top:477.0px;width:45.0px;height:20px;line-height:20px;font-size:15px;color:#000;font-weight:normal;"><span>핸드폰</span></div>
<div style="left:261px;top:473px;width:66px;height:58px;border:3px solid #ff00ff"></div>
<div style="left:835px;top:450px;width:116px;height:49px;border:3px solid #ff00ff"></div>
<div class="f" style="left:286px;top:504.5px;width:17.0px;height:20px;line-height:20px;font-size:15px;color:#ff0000;font-weight:normal;-webkit-text-stroke:0.3px currentColor"><span>76</span></div>
<div style="left:327px;top:514px;width:73px;height:1px;background:repeating-linear-gradient(90deg,#2f3a4a 0 4px,#8a8f70 4px 5px,#2f3a4a 5px 7px,transparent 7px 9px)"></div>
<div class="f" style="left:406px;top:504.5px;width:79.0px;height:20px;line-height:20px;font-size:15px;color:#7030a0;font-weight:normal;-webkit-text-stroke:0.3px currentColor"><span>2020년 1월</span></div>
<div class="f" style="left:498px;top:504.5px;width:81.0px;height:20px;line-height:20px;font-size:15px;color:#7030a0;font-weight:normal;-webkit-text-stroke:0.3px currentColor"><span>2020.01.31</span></div>
<div class="f" style="left:597px;top:504.5px;width:13.0px;height:20px;line-height:20px;font-size:15px;color:#1f3864;font-weight:normal;-webkit-text-stroke:0.3px currentColor"><span>금</span></div>
<div class="f" style="left:659.5px;top:504.5px;width:51.5px;height:20px;line-height:20px;font-size:15px;color:#7030a0;font-weight:normal;"><span>125,000</span></div>
<div class="f" style="left:773.5px;top:504.5px;width:51.5px;height:20px;line-height:20px;font-size:15px;color:#000;font-weight:normal;"><span>125,000</span></div>
<div class="f" style="left:895.5px;top:504.5px;width:43.5px;height:20px;line-height:20px;font-size:15px;color:#000;font-weight:normal;"><span>75,000</span></div>
<div class="f" style="left:1008px;top:504.5px;width:45.5px;height:20px;line-height:20px;font-size:15px;color:#000;font-weight:normal;"><span>50,000</span></div>
<div class="f" style="left:1408px;top:504.5px;width:57.0px;height:20px;line-height:20px;font-size:15px;color:#000;font-weight:normal;"><span>125,000</span></div>
<div class="f" style="left:1084px;top:504.0px;width:18.0px;height:20px;line-height:20px;font-size:15px;color:#002060;font-weight:normal;"><span>0%</span></div>
<div style="left:1187px;top:514px;width:7px;height:1px;background:#000"></div>
<div style="left:1275px;top:514px;width:7px;height:1px;background:#000"></div>
<div style="left:1356px;top:514px;width:7px;height:1px;background:#000"></div>
<div style="left:1668px;top:514px;width:7px;height:1px;background:#000"></div>
<div class="t" style="left:1565px;top:504.0px;width:200px;height:20px;line-height:20px;text-align:right;font-size:15px;color:#000;font-weight:normal;">0</div>
<div class="t" style="left:-12px;top:535.0px;width:120px;height:20px;line-height:20px;text-align:center;font-size:15px;color:#000;font-weight:normal;">2</div>
<div class="f" style="left:1084px;top:535.0px;width:18.0px;height:20px;line-height:20px;font-size:15px;color:#002060;font-weight:normal;"><span>0%</span></div>
<div style="left:1187px;top:545px;width:7px;height:1px;background:#000"></div>
<div style="left:1275px;top:545px;width:7px;height:1px;background:#000"></div>
<div style="left:1356px;top:545px;width:7px;height:1px;background:#000"></div>
<div style="left:818px;top:545px;width:7px;height:1px;background:#000"></div>
<div style="left:932px;top:545px;width:7px;height:1px;background:#000"></div>
<div style="left:1046px;top:545px;width:7px;height:1px;background:#000"></div>
<div style="left:1458px;top:545px;width:7px;height:1px;background:#000"></div>
<div style="left:1668px;top:545px;width:7px;height:1px;background:#000"></div>
<div class="t" style="left:1565px;top:535.0px;width:200px;height:20px;line-height:20px;text-align:right;font-size:15px;color:#000;font-weight:normal;">0</div>
<div class="t" style="left:-12px;top:566.0px;width:120px;height:20px;line-height:20px;text-align:center;font-size:15px;color:#000;font-weight:normal;">3</div>
<div class="f" style="left:1084px;top:566.0px;width:18.0px;height:20px;line-height:20px;font-size:15px;color:#002060;font-weight:normal;"><span>0%</span></div>
<div style="left:1187px;top:576px;width:7px;height:1px;background:#000"></div>
<div style="left:1275px;top:576px;width:7px;height:1px;background:#000"></div>
<div style="left:1356px;top:576px;width:7px;height:1px;background:#000"></div>
<div style="left:818px;top:576px;width:7px;height:1px;background:#000"></div>
<div style="left:932px;top:576px;width:7px;height:1px;background:#000"></div>
<div style="left:1046px;top:576px;width:7px;height:1px;background:#000"></div>
<div style="left:1458px;top:576px;width:7px;height:1px;background:#000"></div>
<div style="left:1668px;top:576px;width:7px;height:1px;background:#000"></div>
<div class="t" style="left:1565px;top:566.0px;width:200px;height:20px;line-height:20px;text-align:right;font-size:15px;color:#000;font-weight:normal;">0</div>
<div class="t" style="left:-12px;top:597.0px;width:120px;height:20px;line-height:20px;text-align:center;font-size:15px;color:#000;font-weight:normal;">4</div>
<div class="f" style="left:1084px;top:597.0px;width:18.0px;height:20px;line-height:20px;font-size:15px;color:#002060;font-weight:normal;"><span>0%</span></div>
<div style="left:1187px;top:607px;width:7px;height:1px;background:#000"></div>
<div style="left:1275px;top:607px;width:7px;height:1px;background:#000"></div>
<div style="left:1356px;top:607px;width:7px;height:1px;background:#000"></div>
<div style="left:818px;top:607px;width:7px;height:1px;background:#000"></div>
<div style="left:932px;top:607px;width:7px;height:1px;background:#000"></div>
<div style="left:1046px;top:607px;width:7px;height:1px;background:#000"></div>
<div style="left:1458px;top:607px;width:7px;height:1px;background:#000"></div>
<div style="left:1668px;top:607px;width:7px;height:1px;background:#000"></div>
<div class="t" style="left:1565px;top:597.0px;width:200px;height:20px;line-height:20px;text-align:right;font-size:15px;color:#000;font-weight:normal;">0</div>
<div class="t" style="left:-12px;top:628.0px;width:120px;height:20px;line-height:20px;text-align:center;font-size:15px;color:#000;font-weight:normal;">5</div>
<div class="f" style="left:1084px;top:628.0px;width:18.0px;height:20px;line-height:20px;font-size:15px;color:#002060;font-weight:normal;"><span>0%</span></div>
<div style="left:1187px;top:638px;width:7px;height:1px;background:#000"></div>
<div style="left:1275px;top:638px;width:7px;height:1px;background:#000"></div>
<div style="left:1356px;top:638px;width:7px;height:1px;background:#000"></div>
<div style="left:818px;top:638px;width:7px;height:1px;background:#000"></div>
<div style="left:932px;top:638px;width:7px;height:1px;background:#000"></div>
<div style="left:1046px;top:638px;width:7px;height:1px;background:#000"></div>
<div style="left:1458px;top:638px;width:7px;height:1px;background:#000"></div>
<div style="left:1668px;top:638px;width:7px;height:1px;background:#000"></div>
<div class="t" style="left:1565px;top:628.0px;width:200px;height:20px;line-height:20px;text-align:right;font-size:15px;color:#000;font-weight:normal;">0</div>
<div class="t" style="left:-12px;top:659.0px;width:120px;height:20px;line-height:20px;text-align:center;font-size:15px;color:#000;font-weight:normal;">6</div>
<div class="f" style="left:1084px;top:659.0px;width:18.0px;height:20px;line-height:20px;font-size:15px;color:#002060;font-weight:normal;"><span>0%</span></div>
<div style="left:1187px;top:669px;width:7px;height:1px;background:#000"></div>
<div style="left:1275px;top:669px;width:7px;height:1px;background:#000"></div>
<div style="left:1356px;top:669px;width:7px;height:1px;background:#000"></div>
<div style="left:818px;top:669px;width:7px;height:1px;background:#000"></div>
<div style="left:932px;top:669px;width:7px;height:1px;background:#000"></div>
<div style="left:1046px;top:669px;width:7px;height:1px;background:#000"></div>
<div style="left:1458px;top:669px;width:7px;height:1px;background:#000"></div>
<div style="left:1668px;top:669px;width:7px;height:1px;background:#000"></div>
<div class="t" style="left:1565px;top:659.0px;width:200px;height:20px;line-height:20px;text-align:right;font-size:15px;color:#000;font-weight:normal;">0</div>
<div class="t" style="left:-12px;top:690.0px;width:120px;height:20px;line-height:20px;text-align:center;font-size:15px;color:#000;font-weight:normal;">7</div>
<div class="f" style="left:1084px;top:690.0px;width:18.0px;height:20px;line-height:20px;font-size:15px;color:#002060;font-weight:normal;"><span>0%</span></div>
<div style="left:1187px;top:700px;width:7px;height:1px;background:#000"></div>
<div style="left:1275px;top:700px;width:7px;height:1px;background:#000"></div>
<div style="left:1356px;top:700px;width:7px;height:1px;background:#000"></div>
<div style="left:818px;top:700px;width:7px;height:1px;background:#000"></div>
<div style="left:932px;top:700px;width:7px;height:1px;background:#000"></div>
<div style="left:1046px;top:700px;width:7px;height:1px;background:#000"></div>
<div style="left:1458px;top:700px;width:7px;height:1px;background:#000"></div>
<div style="left:1668px;top:700px;width:7px;height:1px;background:#000"></div>
<div class="t" style="left:1565px;top:690.0px;width:200px;height:20px;line-height:20px;text-align:right;font-size:15px;color:#000;font-weight:normal;">0</div>
<div class="t" style="left:-12px;top:721.0px;width:120px;height:20px;line-height:20px;text-align:center;font-size:15px;color:#000;font-weight:normal;">8</div>
<div class="f" style="left:1084px;top:721.0px;width:18.0px;height:20px;line-height:20px;font-size:15px;color:#002060;font-weight:normal;"><span>0%</span></div>
<div style="left:1187px;top:731px;width:7px;height:1px;background:#000"></div>
<div style="left:1275px;top:731px;width:7px;height:1px;background:#000"></div>
<div style="left:1356px;top:731px;width:7px;height:1px;background:#000"></div>
<div style="left:818px;top:731px;width:7px;height:1px;background:#000"></div>
<div style="left:932px;top:731px;width:7px;height:1px;background:#000"></div>
<div style="left:1046px;top:731px;width:7px;height:1px;background:#000"></div>
<div style="left:1458px;top:731px;width:7px;height:1px;background:#000"></div>
<div style="left:1668px;top:731px;width:7px;height:1px;background:#000"></div>
<div class="t" style="left:1565px;top:721.0px;width:200px;height:20px;line-height:20px;text-align:right;font-size:15px;color:#000;font-weight:normal;">0</div>
<div class="t" style="left:-12px;top:752.0px;width:120px;height:20px;line-height:20px;text-align:center;font-size:15px;color:#000;font-weight:normal;">9</div>
<div class="f" style="left:1084px;top:752.0px;width:18.0px;height:20px;line-height:20px;font-size:15px;color:#002060;font-weight:normal;"><span>0%</span></div>
<div style="left:1187px;top:762px;width:7px;height:1px;background:#000"></div>
<div style="left:1275px;top:762px;width:7px;height:1px;background:#000"></div>
<div style="left:1356px;top:762px;width:7px;height:1px;background:#000"></div>
<div style="left:818px;top:762px;width:7px;height:1px;background:#000"></div>
<div style="left:932px;top:762px;width:7px;height:1px;background:#000"></div>
<div style="left:1046px;top:762px;width:7px;height:1px;background:#000"></div>
<div style="left:1458px;top:762px;width:7px;height:1px;background:#000"></div>
<div style="left:1668px;top:762px;width:7px;height:1px;background:#000"></div>
<div class="t" style="left:1565px;top:752.0px;width:200px;height:20px;line-height:20px;text-align:right;font-size:15px;color:#000;font-weight:normal;">0</div>
<div class="t" style="left:-12px;top:783.0px;width:120px;height:20px;line-height:20px;text-align:center;font-size:15px;color:#000;font-weight:normal;">10</div>
<div class="f" style="left:1084px;top:783.0px;width:18.0px;height:20px;line-height:20px;font-size:15px;color:#002060;font-weight:normal;"><span>0%</span></div>
<div style="left:1187px;top:793px;width:7px;height:1px;background:#000"></div>
<div style="left:1275px;top:793px;width:7px;height:1px;background:#000"></div>
<div style="left:1356px;top:793px;width:7px;height:1px;background:#000"></div>
<div style="left:818px;top:793px;width:7px;height:1px;background:#000"></div>
<div style="left:932px;top:793px;width:7px;height:1px;background:#000"></div>
<div style="left:1046px;top:793px;width:7px;height:1px;background:#000"></div>
<div style="left:1458px;top:793px;width:7px;height:1px;background:#000"></div>
<div style="left:1668px;top:793px;width:7px;height:1px;background:#000"></div>
<div class="t" style="left:1565px;top:783.0px;width:200px;height:20px;line-height:20px;text-align:right;font-size:15px;color:#000;font-weight:normal;">0</div>
<div class="t" style="left:-12px;top:814.0px;width:120px;height:20px;line-height:20px;text-align:center;font-size:15px;color:#000;font-weight:normal;">11</div>
<div class="f" style="left:1084px;top:814.0px;width:18.0px;height:20px;line-height:20px;font-size:15px;color:#002060;font-weight:normal;"><span>0%</span></div>
<div style="left:1187px;top:824px;width:7px;height:1px;background:#000"></div>
<div style="left:1275px;top:824px;width:7px;height:1px;background:#000"></div>
<div style="left:1356px;top:824px;width:7px;height:1px;background:#000"></div>
<div style="left:818px;top:824px;width:7px;height:1px;background:#000"></div>
<div style="left:932px;top:824px;width:7px;height:1px;background:#000"></div>
<div style="left:1046px;top:824px;width:7px;height:1px;background:#000"></div>
<div style="left:1458px;top:824px;width:7px;height:1px;background:#000"></div>
<div style="left:1668px;top:824px;width:7px;height:1px;background:#000"></div>
<div class="t" style="left:1565px;top:814.0px;width:200px;height:20px;line-height:20px;text-align:right;font-size:15px;color:#000;font-weight:normal;">0</div>
<div class="t" style="left:-12px;top:845.0px;width:120px;height:20px;line-height:20px;text-align:center;font-size:15px;color:#000;font-weight:normal;">12</div>
<div class="f" style="left:1084px;top:845.0px;width:18.0px;height:20px;line-height:20px;font-size:15px;color:#002060;font-weight:normal;"><span>0%</span></div>
<div style="left:1187px;top:855px;width:7px;height:1px;background:#000"></div>
<div style="left:1275px;top:855px;width:7px;height:1px;background:#000"></div>
<div style="left:1356px;top:855px;width:7px;height:1px;background:#000"></div>
<div style="left:818px;top:855px;width:7px;height:1px;background:#000"></div>
<div style="left:932px;top:855px;width:7px;height:1px;background:#000"></div>
<div style="left:1046px;top:855px;width:7px;height:1px;background:#000"></div>
<div style="left:1458px;top:855px;width:7px;height:1px;background:#000"></div>
<div style="left:1668px;top:855px;width:7px;height:1px;background:#000"></div>
<div class="t" style="left:1565px;top:845.0px;width:200px;height:20px;line-height:20px;text-align:right;font-size:15px;color:#000;font-weight:normal;">0</div>
<div class="t" style="left:-12px;top:876.0px;width:120px;height:20px;line-height:20px;text-align:center;font-size:15px;color:#000;font-weight:normal;">13</div>
<div class="f" style="left:1084px;top:876.0px;width:18.0px;height:20px;line-height:20px;font-size:15px;color:#002060;font-weight:normal;"><span>0%</span></div>
<div style="left:1187px;top:886px;width:7px;height:1px;background:#000"></div>
<div style="left:1275px;top:886px;width:7px;height:1px;background:#000"></div>
<div style="left:1356px;top:886px;width:7px;height:1px;background:#000"></div>
<div style="left:818px;top:886px;width:7px;height:1px;background:#000"></div>
<div style="left:932px;top:886px;width:7px;height:1px;background:#000"></div>
<div style="left:1046px;top:886px;width:7px;height:1px;background:#000"></div>
<div style="left:1458px;top:886px;width:7px;height:1px;background:#000"></div>
<div style="left:1668px;top:886px;width:7px;height:1px;background:#000"></div>
<div class="t" style="left:1565px;top:876.0px;width:200px;height:20px;line-height:20px;text-align:right;font-size:15px;color:#000;font-weight:normal;">0</div>
<div class="t" style="left:-12px;top:907.0px;width:120px;height:20px;line-height:20px;text-align:center;font-size:15px;color:#000;font-weight:normal;">14</div>
<div class="f" style="left:1084px;top:907.0px;width:18.0px;height:20px;line-height:20px;font-size:15px;color:#002060;font-weight:normal;"><span>0%</span></div>
<div style="left:1187px;top:917px;width:7px;height:1px;background:#000"></div>
<div style="left:1275px;top:917px;width:7px;height:1px;background:#000"></div>
<div style="left:1356px;top:917px;width:7px;height:1px;background:#000"></div>
<div style="left:818px;top:917px;width:7px;height:1px;background:#000"></div>
<div style="left:932px;top:917px;width:7px;height:1px;background:#000"></div>
<div style="left:1046px;top:917px;width:7px;height:1px;background:#000"></div>
<div style="left:1458px;top:917px;width:7px;height:1px;background:#000"></div>
<div style="left:1668px;top:917px;width:7px;height:1px;background:#000"></div>
<div class="t" style="left:1565px;top:907.0px;width:200px;height:20px;line-height:20px;text-align:right;font-size:15px;color:#000;font-weight:normal;">0</div>
<div class="t" style="left:-12px;top:938.0px;width:120px;height:20px;line-height:20px;text-align:center;font-size:15px;color:#000;font-weight:normal;">15</div>
<div class="f" style="left:1084px;top:938.0px;width:18.0px;height:20px;line-height:20px;font-size:15px;color:#002060;font-weight:normal;"><span>0%</span></div>
<div style="left:1187px;top:948px;width:7px;height:1px;background:#000"></div>
<div style="left:1275px;top:948px;width:7px;height:1px;background:#000"></div>
<div style="left:1356px;top:948px;width:7px;height:1px;background:#000"></div>
<div style="left:818px;top:948px;width:7px;height:1px;background:#000"></div>
<div style="left:932px;top:948px;width:7px;height:1px;background:#000"></div>
<div style="left:1046px;top:948px;width:7px;height:1px;background:#000"></div>
<div style="left:1458px;top:948px;width:7px;height:1px;background:#000"></div>
<div style="left:1668px;top:948px;width:7px;height:1px;background:#000"></div>
<div class="t" style="left:1565px;top:938.0px;width:200px;height:20px;line-height:20px;text-align:right;font-size:15px;color:#000;font-weight:normal;">0</div>
<div class="t" style="left:-12px;top:969.0px;width:120px;height:20px;line-height:20px;text-align:center;font-size:15px;color:#000;font-weight:normal;">16</div>
<div class="f" style="left:1084px;top:969.0px;width:18.0px;height:20px;line-height:20px;font-size:15px;color:#002060;font-weight:normal;"><span>0%</span></div>
<div style="left:1187px;top:979px;width:7px;height:1px;background:#000"></div>
<div style="left:1275px;top:979px;width:7px;height:1px;background:#000"></div>
<div style="left:1356px;top:979px;width:7px;height:1px;background:#000"></div>
<div style="left:818px;top:979px;width:7px;height:1px;background:#000"></div>
<div style="left:932px;top:979px;width:7px;height:1px;background:#000"></div>
<div style="left:1046px;top:979px;width:7px;height:1px;background:#000"></div>
<div style="left:1458px;top:979px;width:7px;height:1px;background:#000"></div>
<div style="left:1668px;top:979px;width:7px;height:1px;background:#000"></div>
<div class="t" style="left:1565px;top:969.0px;width:200px;height:20px;line-height:20px;text-align:right;font-size:15px;color:#000;font-weight:normal;">0</div>
<div class="t" style="left:-12px;top:1000.0px;width:120px;height:20px;line-height:20px;text-align:center;font-size:15px;color:#000;font-weight:normal;">17</div>
<div class="f" style="left:1084px;top:1000.0px;width:18.0px;height:20px;line-height:20px;font-size:15px;color:#002060;font-weight:normal;"><span>0%</span></div>
<div style="left:1187px;top:1010px;width:7px;height:1px;background:#000"></div>
<div style="left:1275px;top:1010px;width:7px;height:1px;background:#000"></div>
<div style="left:1356px;top:1010px;width:7px;height:1px;background:#000"></div>
<div style="left:818px;top:1010px;width:7px;height:1px;background:#000"></div>
<div style="left:932px;top:1010px;width:7px;height:1px;background:#000"></div>
<div style="left:1046px;top:1010px;width:7px;height:1px;background:#000"></div>
<div style="left:1458px;top:1010px;width:7px;height:1px;background:#000"></div>
<div style="left:1668px;top:1010px;width:7px;height:1px;background:#000"></div>
<div class="t" style="left:1565px;top:1000.0px;width:200px;height:20px;line-height:20px;text-align:right;font-size:15px;color:#000;font-weight:normal;">0</div>
<div class="t" style="left:-12px;top:504.5px;width:120px;height:20px;line-height:20px;text-align:center;font-size:15px;color:#000;font-weight:normal;">1</div>
<div style="left:834px;top:931px;width:117px;height:34px;border:2px solid #217346"></div>
<div style="left:947px;top:961px;width:6px;height:6px;background:#217346;border:1px solid #fff"></div>
<div style="left:726px;top:361px;width:159px;height:41px;border:1px solid #000"></div>
<div style="left:734px;top:355px;width:70px;height:12px;background:#fff"></div>
<div class="f" style="left:739.5px;top:354.3px;width:59.0px;height:17px;line-height:17px;font-size:13px;color:#000;font-weight:normal;"><span>원천세부담</span></div>
<svg style="left:744px;top:375px;" width="14" height="14" viewBox="0 0 14 14"><circle cx="7" cy="7" r="5.6" fill="#fff" stroke="#000" stroke-width="1.1"/><circle cx="7" cy="7" r="3" fill="#000"/></svg>
<div class="f" style="left:762px;top:373.0px;width:35.0px;height:17px;line-height:17px;font-size:13px;color:#000;font-weight:normal;"><span>소득자</span></div>
<svg style="left:816px;top:376px;" width="14" height="14" viewBox="0 0 14 14"><circle cx="7" cy="7" r="5.6" fill="#fff" stroke="#000" stroke-width="1.1"/></svg>
<div class="f" style="left:835px;top:373.5px;width:35.0px;height:17px;line-height:17px;font-size:13px;color:#000;font-weight:normal;"><span>사업자</span></div>
<div style="left:1554px;top:340px;width:400px;height:71px;border:1px solid #000"></div>
<div style="left:1561px;top:333px;width:48px;height:14px;background:#fff"></div>
<div class="f" style="left:1567.6px;top:334.0px;width:33.7px;height:17px;line-height:17px;font-size:13px;color:#000;font-weight:normal;"><span>지급일</span></div>
<svg style="left:1565px;top:372px;" width="14" height="14" viewBox="0 0 14 14"><circle cx="7" cy="7" r="5.6" fill="#fff" stroke="#000" stroke-width="1.1"/><circle cx="7" cy="7" r="3" fill="#000"/></svg>
<div class="f" style="left:1583px;top:370.0px;width:62.6px;height:17px;line-height:17px;font-size:13px;color:#000;font-weight:normal;"><span>해당월 말일</span></div>
<svg style="left:1668px;top:372px;" width="14" height="14" viewBox="0 0 14 14"><circle cx="7" cy="7" r="5.6" fill="#fff" stroke="#000" stroke-width="1.1"/></svg>
<div class="f" style="left:1686.4px;top:370.0px;width:57.2px;height:17px;line-height:17px;font-size:13px;color:#000;font-weight:normal;"><span>다음달 5일</span></div>
<svg style="left:1776px;top:372px;" width="14" height="14" viewBox="0 0 14 14"><circle cx="7" cy="7" r="5.6" fill="#fff" stroke="#000" stroke-width="1.1"/></svg>
<div class="f" style="left:1794.3px;top:370.0px;width:63.9px;height:17px;line-height:17px;font-size:13px;color:#000;font-weight:normal;"><span>다음달 10일</span></div>
<svg style="left:1883px;top:372px;" width="14" height="14" viewBox="0 0 14 14"><circle cx="7" cy="7" r="5.6" fill="#fff" stroke="#000" stroke-width="1.1"/></svg>
<div style="left:28px;top:307px;width:1px;height:721px;background:#a5a5a5"></div>
<div style="left:27px;top:932px;width:2px;height:32px;background:#217346"></div></div><script>
(function(){var a=document.querySelectorAll('.f');for(var i=0;i<a.length;i++){var d=a[i],s=d.firstChild;var w=s.getBoundingClientRect().width;var tw=parseFloat(d.style.width);if(w>0){s.style.transform='scaleX('+(tw/w)+')';}}})();
</script></body></html>
